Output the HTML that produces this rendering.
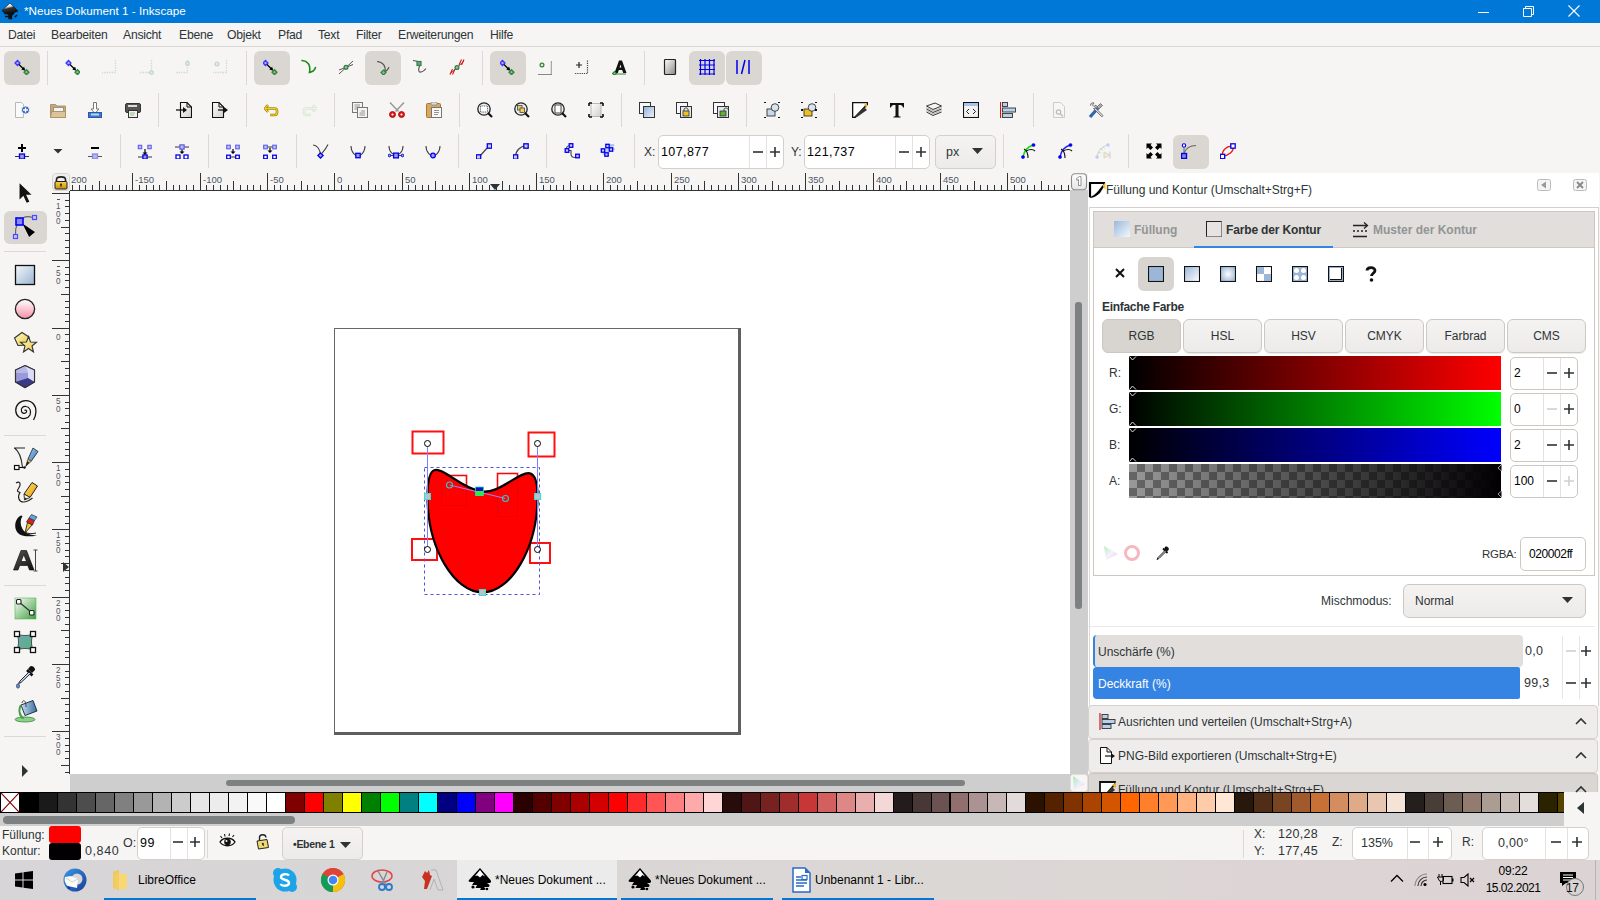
<!DOCTYPE html><html><head><meta charset="utf-8"><style>
html,body{margin:0;padding:0}
body{width:1600px;height:900px;overflow:hidden;position:relative;background:#f6f5f4;font-family:"Liberation Sans",sans-serif;color:#2e3436}
div{position:absolute;box-sizing:border-box}
.t{white-space:nowrap;font-size:12px;line-height:14px}
</style></head><body>
<div style="left:0px;top:0px;width:1600px;height:23px;background:#0078d7"></div>
<div class="t" style="left:24px;top:4px;color:#fff;font-size:11.7px;line-height:14px">*Neues Dokument 1 - Inkscape</div>
<svg style="position:absolute;left:1476px;top:4px;" width="16" height="16" viewBox="0 0 16 16"><path d="M2 8.5h11" stroke="#fff" stroke-width="1"/></svg>
<svg style="position:absolute;left:1520px;top:3px;" width="16" height="16" viewBox="0 0 16 16"><path d="M3.5 5.5h8v8h-8z M5.5 5.5v-2h8v8h-2" fill="none" stroke="#fff" stroke-width="1"/></svg>
<svg style="position:absolute;left:1566px;top:3px;" width="16" height="16" viewBox="0 0 16 16"><path d="M2.5 2.5l11 11M13.5 2.5l-11 11" stroke="#fff" stroke-width="1.1"/></svg>
<div class="t" style="left:8px;top:28px;font-size:12.2px;color:#2e3436;width:27px;letter-spacing:-0.25px">Datei</div>
<div class="t" style="left:51px;top:28px;font-size:12.2px;color:#2e3436;width:56px;letter-spacing:-0.25px">Bearbeiten</div>
<div class="t" style="left:123px;top:28px;font-size:12.2px;color:#2e3436;width:40px;letter-spacing:-0.25px">Ansicht</div>
<div class="t" style="left:179px;top:28px;font-size:12.2px;color:#2e3436;width:32px;letter-spacing:-0.25px">Ebene</div>
<div class="t" style="left:227px;top:28px;font-size:12.2px;color:#2e3436;width:35px;letter-spacing:-0.25px">Objekt</div>
<div class="t" style="left:278px;top:28px;font-size:12.2px;color:#2e3436;width:24px;letter-spacing:-0.25px">Pfad</div>
<div class="t" style="left:318px;top:28px;font-size:12.2px;color:#2e3436;width:22px;letter-spacing:-0.25px">Text</div>
<div class="t" style="left:356px;top:28px;font-size:12.2px;color:#2e3436;width:26px;letter-spacing:-0.25px">Filter</div>
<div class="t" style="left:398px;top:28px;font-size:12.2px;color:#2e3436;width:75px;letter-spacing:-0.25px">Erweiterungen</div>
<div class="t" style="left:490px;top:28px;font-size:12.2px;color:#2e3436;width:25px;letter-spacing:-0.25px">Hilfe</div>
<div style="left:0px;top:46px;width:1600px;height:1px;background:#dad6d2"></div>
<div style="left:70px;top:191px;width:1000px;height:583px;background:#fff"></div>
<div style="left:70px;top:774px;width:1000px;height:18px;background:#cecece"></div>
<div style="left:1070px;top:190px;width:18px;height:602px;background:#cecece"></div>
<div style="left:1088px;top:173px;width:1px;height:533px;background:#dcd8d4"></div>
<div style="left:226px;top:780px;width:739px;height:6px;background:#7e8182;border-radius:3px"></div>
<div style="left:1075px;top:302px;width:7px;height:307px;background:#7e8182;border-radius:3px"></div>
<div style="left:1088px;top:173px;width:511px;height:533px;background:#fff"></div>
<div style="left:1089px;top:207px;width:510px;height:1px;background:#d5d0cc"></div>
<div style="left:1089px;top:207px;width:1px;height:499px;background:#dcd8d4"></div>
<div style="left:1598px;top:207px;width:1px;height:499px;background:#d5d0cc"></div>
<div class="t" style="left:1106px;top:183px;font-size:12px;color:#2e3436">Füllung und Kontur (Umschalt+Strg+F)</div>
<div style="left:1093px;top:211px;width:502px;height:365px;border:1px solid #cdc7c2;background:#fff"></div>
<div style="left:1094px;top:212px;width:500px;height:36px;background:#e1dedb;border-bottom:1px solid #cdc7c2"></div>
<div style="left:1194px;top:246px;width:139px;height:2px;background:#3584e4"></div>
<div class="t" style="left:1134px;top:223px;font-size:12px;color:#929595;font-weight:bold">Füllung</div>
<div class="t" style="left:1226px;top:223px;font-size:12px;color:#2e3436;font-weight:bold;letter-spacing:-0.15px">Farbe der Kontur</div>
<div class="t" style="left:1373px;top:223px;font-size:12px;color:#929595;font-weight:bold">Muster der Kontur</div>
<div style="left:1138px;top:257px;width:36px;height:34px;background:#d8d4d0;border-radius:6px"></div>
<div class="t" style="left:1102px;top:300px;font-size:12px;color:#2e3436;font-weight:bold;letter-spacing:-0.3px">Einfache Farbe</div>
<div style="left:1102px;top:319px;width:79px;height:34px;background:#d8d4d0;border:1px solid #cdc7c2;border-radius:6px"></div>
<div class="t" style="left:1102px;top:329px;width:79px;text-align:center;font-size:12px;color:#2e3436">RGB</div>
<div style="left:1183px;top:319px;width:79px;height:34px;background:linear-gradient(#f4f3f2,#edebe9);border:1px solid #cdc7c2;border-radius:6px;box-shadow:0 1px 0 rgba(0,0,0,0.07)"></div>
<div class="t" style="left:1183px;top:329px;width:79px;text-align:center;font-size:12px;color:#2e3436">HSL</div>
<div style="left:1264px;top:319px;width:79px;height:34px;background:linear-gradient(#f4f3f2,#edebe9);border:1px solid #cdc7c2;border-radius:6px;box-shadow:0 1px 0 rgba(0,0,0,0.07)"></div>
<div class="t" style="left:1264px;top:329px;width:79px;text-align:center;font-size:12px;color:#2e3436">HSV</div>
<div style="left:1345px;top:319px;width:79px;height:34px;background:linear-gradient(#f4f3f2,#edebe9);border:1px solid #cdc7c2;border-radius:6px;box-shadow:0 1px 0 rgba(0,0,0,0.07)"></div>
<div class="t" style="left:1345px;top:329px;width:79px;text-align:center;font-size:12px;color:#2e3436">CMYK</div>
<div style="left:1426px;top:319px;width:79px;height:34px;background:linear-gradient(#f4f3f2,#edebe9);border:1px solid #cdc7c2;border-radius:6px;box-shadow:0 1px 0 rgba(0,0,0,0.07)"></div>
<div class="t" style="left:1426px;top:329px;width:79px;text-align:center;font-size:12px;color:#2e3436">Farbrad</div>
<div style="left:1507px;top:319px;width:79px;height:34px;background:linear-gradient(#f4f3f2,#edebe9);border:1px solid #cdc7c2;border-radius:6px;box-shadow:0 1px 0 rgba(0,0,0,0.07)"></div>
<div class="t" style="left:1507px;top:329px;width:79px;text-align:center;font-size:12px;color:#2e3436">CMS</div>
<div class="t" style="left:1109px;top:366px;font-size:12px;color:#2e3436">R:</div>
<div style="left:1129px;top:356px;width:372px;height:34px;background:linear-gradient(90deg,#000,#ff0000)"></div>
<div style="left:1510px;top:357px;width:68px;height:33px;background:#fff;border:1px solid #cdc7c2;border-radius:5px"></div>
<div style="left:1543px;top:358px;width:1px;height:31px;background:#e4e1de"></div>
<div style="left:1560px;top:358px;width:1px;height:31px;background:#e4e1de"></div>
<div class="t" style="left:1514px;top:366px;font-size:12px;color:#000">2</div>
<div class="t" style="left:1109px;top:402px;font-size:12px;color:#2e3436">G:</div>
<div style="left:1129px;top:392px;width:372px;height:34px;background:linear-gradient(90deg,#000,#00ff00)"></div>
<div style="left:1510px;top:393px;width:68px;height:33px;background:#fff;border:1px solid #cdc7c2;border-radius:5px"></div>
<div style="left:1543px;top:394px;width:1px;height:31px;background:#e4e1de"></div>
<div style="left:1560px;top:394px;width:1px;height:31px;background:#e4e1de"></div>
<div class="t" style="left:1514px;top:402px;font-size:12px;color:#000">0</div>
<div class="t" style="left:1109px;top:438px;font-size:12px;color:#2e3436">B:</div>
<div style="left:1129px;top:428px;width:372px;height:34px;background:linear-gradient(90deg,#000,#0000ff)"></div>
<div style="left:1510px;top:429px;width:68px;height:33px;background:#fff;border:1px solid #cdc7c2;border-radius:5px"></div>
<div style="left:1543px;top:430px;width:1px;height:31px;background:#e4e1de"></div>
<div style="left:1560px;top:430px;width:1px;height:31px;background:#e4e1de"></div>
<div class="t" style="left:1514px;top:438px;font-size:12px;color:#000">2</div>
<div class="t" style="left:1109px;top:474px;font-size:12px;color:#2e3436">A:</div>
<div style="left:1129px;top:464px;width:372px;height:34px;background-color:#999;background-image:linear-gradient(90deg,rgba(2,0,2,0),rgba(2,0,2,1)),linear-gradient(45deg,#666 25%,transparent 25%,transparent 75%,#666 75%),linear-gradient(45deg,#666 25%,transparent 25%,transparent 75%,#666 75%);background-size:100% 100%,16px 16px,16px 16px;background-position:0 0,0 0,8px 8px"></div>
<div style="left:1510px;top:465px;width:68px;height:33px;background:#fff;border:1px solid #cdc7c2;border-radius:5px"></div>
<div style="left:1543px;top:466px;width:1px;height:31px;background:#e4e1de"></div>
<div style="left:1560px;top:466px;width:1px;height:31px;background:#e4e1de"></div>
<div class="t" style="left:1514px;top:474px;font-size:12px;color:#000">100</div>
<div class="t" style="left:1482px;top:547px;font-size:11.5px;color:#2e3436;letter-spacing:-0.3px">RGBA:</div>
<div style="left:1520px;top:537px;width:66px;height:34px;background:#fff;border:1px solid #cdc7c2;border-radius:5px"></div>
<div class="t" style="left:1529px;top:547px;font-size:12px;color:#000;letter-spacing:-0.4px">020002ff</div>
<div class="t" style="left:1321px;top:594px;font-size:12px;color:#2e3436">Mischmodus:</div>
<div style="left:1403px;top:584px;width:183px;height:34px;background:linear-gradient(#f4f3f2,#edebe9);border:1px solid #cdc7c2;border-radius:6px"></div>
<div class="t" style="left:1415px;top:594px;font-size:12px;color:#2e3436">Normal</div>
<div style="left:1088px;top:626px;width:507px;height:1px;background:#ebe9e7"></div>
<div style="left:1093px;top:635px;width:430px;height:32px;background:#e1dedb;border-left:2px solid #3584e4;border-radius:4px"></div>
<div class="t" style="left:1098px;top:645px;font-size:12px;color:#2e3436">Unschärfe (%)</div>
<div class="t" style="left:1525px;top:644px;font-size:12.5px;color:#2e3436;letter-spacing:0.3px">0,0</div>
<div style="left:1093px;top:667px;width:427px;height:32px;background:#3584e4;border-radius:4px 2px 2px 4px"></div>
<div class="t" style="left:1098px;top:677px;font-size:12px;color:#fff">Deckkraft (%)</div>
<div class="t" style="left:1524px;top:676px;font-size:12.5px;color:#2e3436;letter-spacing:0.3px">99,3</div>
<div style="left:1562px;top:636px;width:1px;height:63px;background:#e9e7e5"></div>
<div style="left:1579px;top:636px;width:1px;height:63px;background:#e9e7e5"></div>
<div style="left:1088px;top:705px;width:510px;height:34px;background:#eeedec;border:1px solid #d6d1cd;border-radius:4px"></div>
<div class="t" style="left:1118px;top:715px;font-size:12px;color:#2e3436">Ausrichten und verteilen (Umschalt+Strg+A)</div>
<div style="left:1088px;top:739px;width:510px;height:34px;background:#eeedec;border:1px solid #d6d1cd;border-radius:4px"></div>
<div class="t" style="left:1118px;top:749px;font-size:12px;color:#2e3436">PNG-Bild exportieren (Umschalt+Strg+E)</div>
<div style="left:1088px;top:773px;width:510px;height:19px;background:#dad6d3;border:1px solid #cdc7c2;border-bottom:none;border-radius:4px 4px 0 0"></div>
<div class="t" style="left:1118px;top:783px;font-size:12px;color:#2e3436">Füllung und Kontur (Umschalt+Strg+F)</div>
<div style="left:0px;top:792px;width:1564px;height:21px;background:#000"></div>
<svg style="position:absolute;left:1px;top:793px;" width="18" height="19" viewBox="0 0 18 19"><rect width="18" height="19" fill="#fff"/><path d="M0 0L18 19M18 0L0 19" stroke="#800000" stroke-width="1.2"/></svg>
<div style="left:19.99px;top:793px;width:17.99px;height:19px;background:#000000"></div>
<div style="left:38.98px;top:793px;width:17.99px;height:19px;background:#1a1a1a"></div>
<div style="left:57.97px;top:793px;width:17.99px;height:19px;background:#333333"></div>
<div style="left:76.96px;top:793px;width:17.99px;height:19px;background:#4d4d4d"></div>
<div style="left:95.95px;top:793px;width:17.99px;height:19px;background:#666666"></div>
<div style="left:114.94px;top:793px;width:17.99px;height:19px;background:#808080"></div>
<div style="left:133.93px;top:793px;width:17.99px;height:19px;background:#999999"></div>
<div style="left:152.92px;top:793px;width:17.99px;height:19px;background:#b3b3b3"></div>
<div style="left:171.91px;top:793px;width:17.99px;height:19px;background:#cccccc"></div>
<div style="left:190.9px;top:793px;width:17.99px;height:19px;background:#e6e6e6"></div>
<div style="left:209.89px;top:793px;width:17.99px;height:19px;background:#ececec"></div>
<div style="left:228.88px;top:793px;width:17.99px;height:19px;background:#f2f2f2"></div>
<div style="left:247.87px;top:793px;width:17.99px;height:19px;background:#f9f9f9"></div>
<div style="left:266.86px;top:793px;width:17.99px;height:19px;background:#ffffff"></div>
<div style="left:285.85px;top:793px;width:17.99px;height:19px;background:#800000"></div>
<div style="left:304.84px;top:793px;width:17.99px;height:19px;background:#ff0000"></div>
<div style="left:323.83px;top:793px;width:17.99px;height:19px;background:#808000"></div>
<div style="left:342.82px;top:793px;width:17.99px;height:19px;background:#ffff00"></div>
<div style="left:361.81px;top:793px;width:17.99px;height:19px;background:#008000"></div>
<div style="left:380.8px;top:793px;width:17.99px;height:19px;background:#00ff00"></div>
<div style="left:399.79px;top:793px;width:17.99px;height:19px;background:#008080"></div>
<div style="left:418.78px;top:793px;width:17.99px;height:19px;background:#00ffff"></div>
<div style="left:437.77px;top:793px;width:17.99px;height:19px;background:#000080"></div>
<div style="left:456.76px;top:793px;width:17.99px;height:19px;background:#0000ff"></div>
<div style="left:475.75px;top:793px;width:17.99px;height:19px;background:#800080"></div>
<div style="left:494.74px;top:793px;width:17.99px;height:19px;background:#ff00ff"></div>
<div style="left:513.73px;top:793px;width:17.99px;height:19px;background:#2b0000"></div>
<div style="left:532.72px;top:793px;width:17.99px;height:19px;background:#550000"></div>
<div style="left:551.71px;top:793px;width:17.99px;height:19px;background:#800000"></div>
<div style="left:570.7px;top:793px;width:17.99px;height:19px;background:#aa0000"></div>
<div style="left:589.69px;top:793px;width:17.99px;height:19px;background:#d40000"></div>
<div style="left:608.68px;top:793px;width:17.99px;height:19px;background:#ff0000"></div>
<div style="left:627.67px;top:793px;width:17.99px;height:19px;background:#ff2a2a"></div>
<div style="left:646.66px;top:793px;width:17.99px;height:19px;background:#ff5555"></div>
<div style="left:665.65px;top:793px;width:17.99px;height:19px;background:#ff8080"></div>
<div style="left:684.64px;top:793px;width:17.99px;height:19px;background:#ffaaaa"></div>
<div style="left:703.63px;top:793px;width:17.99px;height:19px;background:#ffd5d5"></div>
<div style="left:722.62px;top:793px;width:17.99px;height:19px;background:#280b0b"></div>
<div style="left:741.61px;top:793px;width:17.99px;height:19px;background:#501616"></div>
<div style="left:760.6px;top:793px;width:17.99px;height:19px;background:#782121"></div>
<div style="left:779.59px;top:793px;width:17.99px;height:19px;background:#a02c2c"></div>
<div style="left:798.58px;top:793px;width:17.99px;height:19px;background:#c83737"></div>
<div style="left:817.57px;top:793px;width:17.99px;height:19px;background:#d35f5f"></div>
<div style="left:836.56px;top:793px;width:17.99px;height:19px;background:#de8787"></div>
<div style="left:855.55px;top:793px;width:17.99px;height:19px;background:#e9afaf"></div>
<div style="left:874.54px;top:793px;width:17.99px;height:19px;background:#f4d7d7"></div>
<div style="left:893.53px;top:793px;width:17.99px;height:19px;background:#241c1c"></div>
<div style="left:912.52px;top:793px;width:17.99px;height:19px;background:#483737"></div>
<div style="left:931.51px;top:793px;width:17.99px;height:19px;background:#6c5353"></div>
<div style="left:950.5px;top:793px;width:17.99px;height:19px;background:#916f6f"></div>
<div style="left:969.49px;top:793px;width:17.99px;height:19px;background:#ac9393"></div>
<div style="left:988.48px;top:793px;width:17.99px;height:19px;background:#c8b7b7"></div>
<div style="left:1007.47px;top:793px;width:17.99px;height:19px;background:#e3dbdb"></div>
<div style="left:1026.46px;top:793px;width:17.99px;height:19px;background:#2b1100"></div>
<div style="left:1045.45px;top:793px;width:17.99px;height:19px;background:#552200"></div>
<div style="left:1064.44px;top:793px;width:17.99px;height:19px;background:#803300"></div>
<div style="left:1083.43px;top:793px;width:17.99px;height:19px;background:#aa4400"></div>
<div style="left:1102.42px;top:793px;width:17.99px;height:19px;background:#d45500"></div>
<div style="left:1121.41px;top:793px;width:17.99px;height:19px;background:#ff6600"></div>
<div style="left:1140.4px;top:793px;width:17.99px;height:19px;background:#ff7f2a"></div>
<div style="left:1159.39px;top:793px;width:17.99px;height:19px;background:#ff9955"></div>
<div style="left:1178.38px;top:793px;width:17.99px;height:19px;background:#ffb380"></div>
<div style="left:1197.37px;top:793px;width:17.99px;height:19px;background:#ffccaa"></div>
<div style="left:1216.36px;top:793px;width:17.99px;height:19px;background:#ffe6d5"></div>
<div style="left:1235.35px;top:793px;width:17.99px;height:19px;background:#28170b"></div>
<div style="left:1254.34px;top:793px;width:17.99px;height:19px;background:#502d16"></div>
<div style="left:1273.33px;top:793px;width:17.99px;height:19px;background:#784421"></div>
<div style="left:1292.32px;top:793px;width:17.99px;height:19px;background:#a05a2c"></div>
<div style="left:1311.31px;top:793px;width:17.99px;height:19px;background:#c87137"></div>
<div style="left:1330.3px;top:793px;width:17.99px;height:19px;background:#d38d5f"></div>
<div style="left:1349.29px;top:793px;width:17.99px;height:19px;background:#deaa87"></div>
<div style="left:1368.28px;top:793px;width:17.99px;height:19px;background:#e9c6af"></div>
<div style="left:1387.27px;top:793px;width:17.99px;height:19px;background:#f4e3d7"></div>
<div style="left:1406.26px;top:793px;width:17.99px;height:19px;background:#241f1c"></div>
<div style="left:1425.25px;top:793px;width:17.99px;height:19px;background:#483e37"></div>
<div style="left:1444.24px;top:793px;width:17.99px;height:19px;background:#6c5d53"></div>
<div style="left:1463.23px;top:793px;width:17.99px;height:19px;background:#917c6f"></div>
<div style="left:1482.22px;top:793px;width:17.99px;height:19px;background:#ac9d93"></div>
<div style="left:1501.21px;top:793px;width:17.99px;height:19px;background:#c8beb7"></div>
<div style="left:1520.2px;top:793px;width:17.99px;height:19px;background:#e3dedb"></div>
<div style="left:1539.19px;top:793px;width:17.99px;height:19px;background:#2b2200"></div>
<div style="left:1558.18px;top:793px;width:5.82px;height:19px;background:#554400"></div>
<div style="left:1564px;top:792px;width:36px;height:34px;background:#f6f5f4"></div>
<svg style="position:absolute;left:1576px;top:802px;" width="10" height="12" viewBox="0 0 10 12"><path d="M8 0v12L1 6z" fill="#2e3436"/></svg>
<div style="left:0px;top:813px;width:1564px;height:13px;background:#cecece"></div>
<div style="left:3px;top:816px;width:292px;height:8px;background:#7e8182;border-radius:4px"></div>
<div style="left:0px;top:826px;width:1600px;height:34px;background:#f6f5f4"></div>
<div class="t" style="left:2px;top:828px;font-size:12px;color:#2e3436">Füllung:</div>
<div class="t" style="left:2px;top:844px;font-size:12px;color:#2e3436">Kontur:</div>
<div style="left:49px;top:826px;width:32px;height:17px;background:#f00;border-radius:3px"></div>
<div style="left:49px;top:843px;width:32px;height:17px;background:#020002;border-radius:3px"></div>
<div class="t" style="left:85px;top:844px;font-size:12.5px;color:#2e3436;letter-spacing:0.6px">0,840</div>
<div class="t" style="left:123px;top:836px;font-size:12.5px;color:#2e3436">O:</div>
<div style="left:137px;top:827px;width:68px;height:33px;background:#fff;border:1px solid #d3cfcb;border-radius:5px"></div>
<div style="left:170px;top:828px;width:1px;height:31px;background:#e4e1de"></div>
<div style="left:187px;top:828px;width:1px;height:31px;background:#e4e1de"></div>
<div class="t" style="left:140px;top:836px;font-size:12.5px;color:#000;letter-spacing:0.5px">99</div>
<div style="left:207px;top:830px;width:1px;height:28px;background:#dcd8d4"></div>
<div style="left:282px;top:827px;width:81px;height:33px;background:linear-gradient(#f4f3f2,#edebe9);border:1px solid #d3cfcb;border-radius:5px"></div>
<div class="t" style="left:293px;top:837px;font-size:10.5px;color:#2e3436;font-weight:bold;letter-spacing:-0.3px">•Ebene 1</div>
<div style="left:1243px;top:830px;width:1px;height:28px;background:#dcd8d4"></div>
<div class="t" style="left:1254px;top:827px;font-size:12px;color:#2e3436">X:</div>
<div class="t" style="left:1254px;top:844px;font-size:12px;color:#2e3436">Y:</div>
<div class="t" style="left:1278px;top:827px;font-size:12.5px;color:#2e3436;letter-spacing:0.3px">120,28</div>
<div class="t" style="left:1278px;top:844px;font-size:12.5px;color:#2e3436;letter-spacing:0.3px">177,45</div>
<div class="t" style="left:1332px;top:835px;font-size:12px;color:#2e3436">Z:</div>
<div style="left:1352px;top:827px;width:100px;height:33px;background:#fff;border:1px solid #d3cfcb;border-radius:5px"></div>
<div style="left:1407px;top:828px;width:1px;height:31px;background:#e4e1de"></div>
<div style="left:1428px;top:828px;width:1px;height:31px;background:#e4e1de"></div>
<div class="t" style="left:1361px;top:836px;font-size:12.5px;color:#2e3436">135%</div>
<div class="t" style="left:1462px;top:835px;font-size:12px;color:#2e3436">R:</div>
<div style="left:1482px;top:827px;width:107px;height:33px;background:#fff;border:1px solid #d3cfcb;border-radius:5px"></div>
<div style="left:1545px;top:828px;width:1px;height:31px;background:#e4e1de"></div>
<div style="left:1567px;top:828px;width:1px;height:31px;background:#e4e1de"></div>
<div class="t" style="left:1498px;top:836px;font-size:12.5px;color:#2e3436;letter-spacing:0.3px">0,00°</div>
<div style="left:0px;top:860px;width:1600px;height:40px;background:linear-gradient(90deg,#d7d5d7,#d9d6d6 35%,#dbd7d5 60%,#ddd5d5 80%,#dcd4d4)"></div>
<div style="left:104px;top:898px;width:152px;height:2px;background:#0078d7"></div>
<div class="t" style="left:138px;top:873px;font-size:12px;color:#000">LibreOffice</div>
<div style="left:457px;top:860px;width:160px;height:40px;background:#ecebeb"></div>
<div style="left:457px;top:898px;width:160px;height:2px;background:#0078d7"></div>
<div class="t" style="left:495px;top:873px;font-size:12px;color:#000">*Neues Dokument ...</div>
<div style="left:621px;top:898px;width:152px;height:2px;background:#0078d7"></div>
<div class="t" style="left:655px;top:873px;font-size:12px;color:#000">*Neues Dokument ...</div>
<div style="left:782px;top:898px;width:152px;height:2px;background:#0078d7"></div>
<div class="t" style="left:815px;top:873px;font-size:12px;color:#000">Unbenannt 1 - Libr...</div>
<div class="t" style="left:1473px;top:864px;font-size:12px;color:#000;width:80px;text-align:center;letter-spacing:-0.2px">09:22</div>
<div class="t" style="left:1473px;top:881px;font-size:12px;color:#000;width:80px;text-align:center;letter-spacing:-0.55px">15.02.2021</div>
<svg style="position:absolute;left:70px;top:173px;" width="1000" height="18" viewBox="0 0 1000 18"><path d="M2.5 12V17 M9.5 12V17 M15.5 12V17 M22.5 12V17 M29.5 8V17 M35.5 12V17 M42.5 12V17 M49.5 12V17 M56.5 12V17 M62.5 0V17 M69.5 12V17 M76.5 12V17 M83.5 12V17 M89.5 12V17 M96.5 8V17 M103.5 12V17 M109.5 12V17 M116.5 12V17 M123.5 12V17 M130.5 0V17 M136.5 12V17 M143.5 12V17 M150.5 12V17 M157.5 12V17 M163.5 8V17 M170.5 12V17 M177.5 12V17 M183.5 12V17 M190.5 12V17 M197.5 0V17 M204.5 12V17 M210.5 12V17 M217.5 12V17 M224.5 12V17 M231.5 8V17 M237.5 12V17 M244.5 12V17 M251.5 12V17 M258.5 12V17 M264.5 0V17 M271.5 12V17 M278.5 12V17 M284.5 12V17 M291.5 12V17 M298.5 8V17 M305.5 12V17 M311.5 12V17 M318.5 12V17 M325.5 12V17 M332.5 0V17 M338.5 12V17 M345.5 12V17 M352.5 12V17 M358.5 12V17 M365.5 8V17 M372.5 12V17 M379.5 12V17 M385.5 12V17 M392.5 12V17 M399.5 0V17 M406.5 12V17 M412.5 12V17 M419.5 12V17 M426.5 12V17 M432.5 8V17 M439.5 12V17 M446.5 12V17 M453.5 12V17 M459.5 12V17 M466.5 0V17 M473.5 12V17 M480.5 12V17 M486.5 12V17 M493.5 12V17 M500.5 8V17 M507.5 12V17 M513.5 12V17 M520.5 12V17 M527.5 12V17 M533.5 0V17 M540.5 12V17 M547.5 12V17 M554.5 12V17 M560.5 12V17 M567.5 8V17 M574.5 12V17 M581.5 12V17 M587.5 12V17 M594.5 12V17 M601.5 0V17 M607.5 12V17 M614.5 12V17 M621.5 12V17 M628.5 12V17 M634.5 8V17 M641.5 12V17 M648.5 12V17 M655.5 12V17 M661.5 12V17 M668.5 0V17 M675.5 12V17 M682.5 12V17 M688.5 12V17 M695.5 12V17 M702.5 8V17 M708.5 12V17 M715.5 12V17 M722.5 12V17 M729.5 12V17 M735.5 0V17 M742.5 12V17 M749.5 12V17 M756.5 12V17 M762.5 12V17 M769.5 8V17 M776.5 12V17 M782.5 12V17 M789.5 12V17 M796.5 12V17 M803.5 0V17 M809.5 12V17 M816.5 12V17 M823.5 12V17 M830.5 12V17 M836.5 8V17 M843.5 12V17 M850.5 12V17 M856.5 12V17 M863.5 12V17 M870.5 0V17 M877.5 12V17 M883.5 12V17 M890.5 12V17 M897.5 12V17 M904.5 8V17 M910.5 12V17 M917.5 12V17 M924.5 12V17 M931.5 12V17 M937.5 0V17 M944.5 12V17 M951.5 12V17 M957.5 12V17 M964.5 12V17 M971.5 8V17 M978.5 12V17 M984.5 12V17 M991.5 12V17 M998.5 12V17 M0 17.5H1000" stroke="#2e3436" stroke-width="1" fill="none"/></svg>
<div class="t" style="left:135px;top:175px;font-size:9.5px;line-height:10px;color:#4d5563">-150</div>
<div class="t" style="left:203px;top:175px;font-size:9.5px;line-height:10px;color:#4d5563">-100</div>
<div class="t" style="left:270px;top:175px;font-size:9.5px;line-height:10px;color:#4d5563">-50</div>
<div class="t" style="left:337px;top:175px;font-size:9.5px;line-height:10px;color:#4d5563">0</div>
<div class="t" style="left:405px;top:175px;font-size:9.5px;line-height:10px;color:#4d5563">50</div>
<div class="t" style="left:472px;top:175px;font-size:9.5px;line-height:10px;color:#4d5563">100</div>
<div class="t" style="left:539px;top:175px;font-size:9.5px;line-height:10px;color:#4d5563">150</div>
<div class="t" style="left:606px;top:175px;font-size:9.5px;line-height:10px;color:#4d5563">200</div>
<div class="t" style="left:674px;top:175px;font-size:9.5px;line-height:10px;color:#4d5563">250</div>
<div class="t" style="left:741px;top:175px;font-size:9.5px;line-height:10px;color:#4d5563">300</div>
<div class="t" style="left:808px;top:175px;font-size:9.5px;line-height:10px;color:#4d5563">350</div>
<div class="t" style="left:876px;top:175px;font-size:9.5px;line-height:10px;color:#4d5563">400</div>
<div class="t" style="left:943px;top:175px;font-size:9.5px;line-height:10px;color:#4d5563">450</div>
<div class="t" style="left:1010px;top:175px;font-size:9.5px;line-height:10px;color:#4d5563">500</div>
<div class="t" style="left:71px;top:175px;font-size:9.5px;line-height:10px;color:#4d5563">200</div>
<svg style="position:absolute;left:52px;top:173px;" width="18" height="601" viewBox="0 0 18 601"><path d="M0 20.5H17 M13 27.5H17 M13 33.5H17 M13 40.5H17 M13 47.5H17 M9 54.5H17 M13 60.5H17 M13 67.5H17 M13 74.5H17 M13 80.5H17 M0 87.5H17 M13 94.5H17 M13 101.5H17 M13 107.5H17 M13 114.5H17 M9 121.5H17 M13 128.5H17 M13 134.5H17 M13 141.5H17 M13 148.5H17 M0 155.5H17 M13 161.5H17 M13 168.5H17 M13 175.5H17 M13 181.5H17 M9 188.5H17 M13 195.5H17 M13 202.5H17 M13 208.5H17 M13 215.5H17 M0 222.5H17 M13 229.5H17 M13 235.5H17 M13 242.5H17 M13 249.5H17 M9 255.5H17 M13 262.5H17 M13 269.5H17 M13 276.5H17 M13 282.5H17 M0 289.5H17 M13 296.5H17 M13 303.5H17 M13 309.5H17 M13 316.5H17 M9 323.5H17 M13 329.5H17 M13 336.5H17 M13 343.5H17 M13 350.5H17 M0 356.5H17 M13 363.5H17 M13 370.5H17 M13 377.5H17 M13 383.5H17 M9 390.5H17 M13 397.5H17 M13 404.5H17 M13 410.5H17 M13 417.5H17 M0 424.5H17 M13 430.5H17 M13 437.5H17 M13 444.5H17 M13 451.5H17 M9 457.5H17 M13 464.5H17 M13 471.5H17 M13 478.5H17 M13 484.5H17 M0 491.5H17 M13 498.5H17 M13 504.5H17 M13 511.5H17 M13 518.5H17 M9 525.5H17 M13 531.5H17 M13 538.5H17 M13 545.5H17 M13 552.5H17 M0 558.5H17 M13 565.5H17 M13 572.5H17 M13 578.5H17 M13 585.5H17 M9 592.5H17 M13 599.5H17 M17.5 18V601" stroke="#2e3436" stroke-width="1" fill="none"/></svg>
<div style="left:57px;top:199px;width:3px;height:1px;background:#4d5563"></div>
<div class="t" style="left:56px;top:202px;font-size:9px;line-height:8px;height:8px;color:#4d5563;transform:scaleX(0.9);transform-origin:0 0">1</div>
<div class="t" style="left:56px;top:209.7px;font-size:9px;line-height:8px;height:8px;color:#4d5563;transform:scaleX(0.9);transform-origin:0 0">0</div>
<div class="t" style="left:56px;top:217.39999999999998px;font-size:9px;line-height:8px;height:8px;color:#4d5563;transform:scaleX(0.9);transform-origin:0 0">0</div>
<div style="left:57px;top:266px;width:3px;height:1px;background:#4d5563"></div>
<div class="t" style="left:56px;top:269px;font-size:9px;line-height:8px;height:8px;color:#4d5563;transform:scaleX(0.9);transform-origin:0 0">5</div>
<div class="t" style="left:56px;top:276.7px;font-size:9px;line-height:8px;height:8px;color:#4d5563;transform:scaleX(0.9);transform-origin:0 0">0</div>
<div class="t" style="left:56px;top:333px;font-size:9px;line-height:8px;height:8px;color:#4d5563;transform:scaleX(0.9);transform-origin:0 0">0</div>
<div class="t" style="left:56px;top:397px;font-size:9px;line-height:8px;height:8px;color:#4d5563;transform:scaleX(0.9);transform-origin:0 0">5</div>
<div class="t" style="left:56px;top:404.7px;font-size:9px;line-height:8px;height:8px;color:#4d5563;transform:scaleX(0.9);transform-origin:0 0">0</div>
<div class="t" style="left:56px;top:464px;font-size:9px;line-height:8px;height:8px;color:#4d5563;transform:scaleX(0.9);transform-origin:0 0">1</div>
<div class="t" style="left:56px;top:471.7px;font-size:9px;line-height:8px;height:8px;color:#4d5563;transform:scaleX(0.9);transform-origin:0 0">0</div>
<div class="t" style="left:56px;top:479.4px;font-size:9px;line-height:8px;height:8px;color:#4d5563;transform:scaleX(0.9);transform-origin:0 0">0</div>
<div class="t" style="left:56px;top:531px;font-size:9px;line-height:8px;height:8px;color:#4d5563;transform:scaleX(0.9);transform-origin:0 0">1</div>
<div class="t" style="left:56px;top:538.7px;font-size:9px;line-height:8px;height:8px;color:#4d5563;transform:scaleX(0.9);transform-origin:0 0">5</div>
<div class="t" style="left:56px;top:546.4000000000001px;font-size:9px;line-height:8px;height:8px;color:#4d5563;transform:scaleX(0.9);transform-origin:0 0">0</div>
<div class="t" style="left:56px;top:599px;font-size:9px;line-height:8px;height:8px;color:#4d5563;transform:scaleX(0.9);transform-origin:0 0">2</div>
<div class="t" style="left:56px;top:606.7px;font-size:9px;line-height:8px;height:8px;color:#4d5563;transform:scaleX(0.9);transform-origin:0 0">0</div>
<div class="t" style="left:56px;top:614.4000000000001px;font-size:9px;line-height:8px;height:8px;color:#4d5563;transform:scaleX(0.9);transform-origin:0 0">0</div>
<div class="t" style="left:56px;top:666px;font-size:9px;line-height:8px;height:8px;color:#4d5563;transform:scaleX(0.9);transform-origin:0 0">2</div>
<div class="t" style="left:56px;top:673.7px;font-size:9px;line-height:8px;height:8px;color:#4d5563;transform:scaleX(0.9);transform-origin:0 0">5</div>
<div class="t" style="left:56px;top:681.4000000000001px;font-size:9px;line-height:8px;height:8px;color:#4d5563;transform:scaleX(0.9);transform-origin:0 0">0</div>
<div class="t" style="left:56px;top:733px;font-size:9px;line-height:8px;height:8px;color:#4d5563;transform:scaleX(0.9);transform-origin:0 0">3</div>
<div class="t" style="left:56px;top:740.7px;font-size:9px;line-height:8px;height:8px;color:#4d5563;transform:scaleX(0.9);transform-origin:0 0">0</div>
<div class="t" style="left:56px;top:748.4000000000001px;font-size:9px;line-height:8px;height:8px;color:#4d5563;transform:scaleX(0.9);transform-origin:0 0">0</div>
<div style="left:4px;top:51px;width:36px;height:34px;background:#dad6d2;border-radius:6px"></div>
<div style="left:47px;top:51px;width:1px;height:34px;background:#dcd8d4"></div>
<div style="left:246px;top:51px;width:1px;height:34px;background:#dcd8d4"></div>
<div style="left:482px;top:51px;width:1px;height:34px;background:#dcd8d4"></div>
<div style="left:644px;top:51px;width:1px;height:34px;background:#dcd8d4"></div>
<div style="left:254px;top:51px;width:36px;height:34px;background:#dad6d2;border-radius:6px"></div>
<div style="left:365px;top:51px;width:36px;height:34px;background:#dad6d2;border-radius:6px"></div>
<div style="left:490px;top:51px;width:36px;height:34px;background:#dad6d2;border-radius:6px"></div>
<div style="left:689px;top:51px;width:36px;height:34px;background:#dad6d2;border-radius:6px"></div>
<div style="left:726px;top:51px;width:36px;height:34px;background:#dad6d2;border-radius:6px"></div>
<div style="left:158px;top:93px;width:1px;height:34px;background:#dcd8d4"></div>
<div style="left:246px;top:93px;width:1px;height:34px;background:#dcd8d4"></div>
<div style="left:334px;top:93px;width:1px;height:34px;background:#dcd8d4"></div>
<div style="left:459px;top:93px;width:1px;height:34px;background:#dcd8d4"></div>
<div style="left:621px;top:93px;width:1px;height:34px;background:#dcd8d4"></div>
<div style="left:746px;top:93px;width:1px;height:34px;background:#dcd8d4"></div>
<div style="left:834px;top:93px;width:1px;height:34px;background:#dcd8d4"></div>
<div style="left:1033px;top:93px;width:1px;height:34px;background:#dcd8d4"></div>
<div style="left:120px;top:134px;width:1px;height:34px;background:#dcd8d4"></div>
<div style="left:208px;top:134px;width:1px;height:34px;background:#dcd8d4"></div>
<div style="left:296px;top:134px;width:1px;height:34px;background:#dcd8d4"></div>
<div style="left:458px;top:134px;width:1px;height:34px;background:#dcd8d4"></div>
<div style="left:546px;top:134px;width:1px;height:34px;background:#dcd8d4"></div>
<div style="left:634px;top:134px;width:1px;height:34px;background:#dcd8d4"></div>
<div style="left:1003px;top:134px;width:1px;height:34px;background:#dcd8d4"></div>
<div style="left:1128px;top:134px;width:1px;height:34px;background:#dcd8d4"></div>
<div style="left:1173px;top:135px;width:36px;height:34px;background:#dad6d2;border-radius:6px"></div>
<div class="t" style="left:644px;top:145px;font-size:12px;color:#2e3436">X:</div>
<div style="left:658px;top:135px;width:126px;height:34px;background:#fff;border:1px solid #d3cfcb;border-radius:5px"></div>
<div style="left:749px;top:136px;width:1px;height:32px;background:#e4e1de"></div>
<div style="left:766px;top:136px;width:1px;height:32px;background:#e4e1de"></div>
<div class="t" style="left:661px;top:145px;font-size:12.5px;color:#000;letter-spacing:0.4px">107,877</div>
<div class="t" style="left:791px;top:145px;font-size:12px;color:#2e3436">Y:</div>
<div style="left:804px;top:135px;width:126px;height:34px;background:#fff;border:1px solid #d3cfcb;border-radius:5px"></div>
<div style="left:895px;top:136px;width:1px;height:32px;background:#e4e1de"></div>
<div style="left:912px;top:136px;width:1px;height:32px;background:#e4e1de"></div>
<div class="t" style="left:807px;top:145px;font-size:12.5px;color:#000;letter-spacing:0.4px">121,737</div>
<div style="left:935px;top:135px;width:61px;height:34px;background:linear-gradient(#f4f3f2,#edebe9);border:1px solid #d3cfcb;border-radius:5px"></div>
<div class="t" style="left:946px;top:145px;font-size:12.5px;color:#2e3436">px</div>
<div style="left:334px;top:328px;width:405px;height:405px;border:1px solid #666;border-right:none;border-bottom:none"></div>
<div style="left:738px;top:328px;width:3px;height:407px;background:#5f5f5f"></div>
<div style="left:334px;top:732px;width:407px;height:3px;background:#5f5f5f"></div>
<svg style="position:absolute;left:400px;top:420px;" width="170" height="190" viewBox="0 0 170 190">
<g transform="translate(-400 -420)">
<rect x="441.5" y="475.5" width="25" height="30" fill="none" stroke="#ff1010" stroke-width="1.6"/>
<rect x="497.5" y="473.5" width="20" height="43" fill="none" stroke="#ff1010" stroke-width="1.6"/>
<rect x="412.5" y="431.5" width="31" height="22" fill="none" stroke="#ff1010" stroke-width="2"/>
<rect x="528.5" y="432.5" width="26" height="24" fill="none" stroke="#ff1010" stroke-width="2"/>
<rect x="412" y="539" width="25" height="21" fill="none" stroke="#ff1010" stroke-width="2"/>
<rect x="530" y="543" width="20" height="20" fill="none" stroke="#ff1010" stroke-width="2"/>
<path d="M427.5 496.5C427.5 549.5 455 592.5 482.5 592.5C510 592.5 537.5 549.5 537.5 496.5C537.5 443.5 505.5 498.5 479.5 491C449.5 485 427.5 443.5 427.5 496.5Z" fill="#ff0000" stroke="#000" stroke-width="2.2"/>
<rect x="441.5" y="475.5" width="25" height="30" fill="none" stroke="#600000" stroke-width="1" opacity="0.12"/>
<rect x="497.5" y="473.5" width="20" height="43" fill="none" stroke="#600000" stroke-width="1" opacity="0.12"/>
<path d="M427.5 446.5V546.5M537.5 446.5V546.5" stroke="#8080ff" stroke-width="1"/>
<rect x="424.5" y="467.5" width="115" height="127" fill="none" stroke="#5050e0" stroke-width="1" stroke-dasharray="3 3"/>
<circle cx="427.5" cy="443.5" r="3" fill="none" stroke="#000" stroke-width="1"/>
<circle cx="537.5" cy="443.5" r="3" fill="none" stroke="#000" stroke-width="1"/>
<circle cx="427.5" cy="549.5" r="3" fill="none" stroke="#000" stroke-width="1"/>
<circle cx="537.5" cy="549.5" r="3" fill="none" stroke="#000" stroke-width="1"/>
<path d="M449.5 485L505.5 498.5" stroke="#a080ff" stroke-width="1"/>
<circle cx="449.5" cy="485" r="3" fill="none" stroke="#20d0d0" stroke-width="1.1"/>
<circle cx="505.5" cy="498.5" r="3" fill="none" stroke="#20d0d0" stroke-width="1.1"/>
<rect x="424.5" y="493.5" width="6" height="6" fill="#c0c0c0" stroke="#30e0e0" stroke-width="1"/>
<rect x="534.5" y="493.5" width="6" height="6" fill="#c0c0c0" stroke="#30e0e0" stroke-width="1"/>
<rect x="479.5" y="589.5" width="6" height="6" fill="#c0c0c0" stroke="#30e0e0" stroke-width="1"/>
<rect x="475.5" y="487" width="8" height="4" fill="#1010c0"/>
<rect x="475.5" y="491" width="8" height="5" fill="#30ee30"/>
<rect x="475.5" y="487" width="8" height="8.5" fill="none" stroke="#30d0d0" stroke-width="0.8"/>
</g></svg>
<svg style="position:absolute;left:52px;top:173px;" width="18" height="18" viewBox="0 0 18 18"><defs><linearGradient id="lk" x1="0" y1="0" x2="0" y2="1"><stop offset="0" stop-color="#f8d040"/><stop offset="1" stop-color="#c89010"/></linearGradient></defs><rect x="0.5" y="0.5" width="17" height="17" rx="3" fill="#f0eeec" stroke="#d8d4d0"/><path d="M4.5 9V6.5C4.5 3 13.5 3 13.5 6.5V9" fill="none" stroke="#222" stroke-width="1.6"/><rect x="3" y="8.5" width="12" height="7.5" rx="1" fill="url(#lk)" stroke="#222" stroke-width="1"/><circle cx="9" cy="11.5" r="1" fill="#222"/><path d="M9 12V14" stroke="#222" stroke-width="1"/></svg>
<svg style="position:absolute;left:490px;top:184px;" width="10" height="6" viewBox="0 0 10 6"><path d="M0 0H10L5 6Z" fill="#2e3436"/></svg>
<svg style="position:absolute;left:63px;top:562px;" width="6" height="10" viewBox="0 0 6 10"><path d="M0 0V10L6 5Z" fill="#2e3436"/></svg>
<svg style="position:absolute;left:14px;top:59px;" width="16" height="16" viewBox="0 0 16 16"><path d="M3.5 1.6L5.9 4L3.5 6.4L1.1 4Z" fill="#b0b0ff" stroke="#3a3aff" stroke-width="1.4"/><path d="M5 5.5L10 10.5" stroke="#000" stroke-width="1.3"/><path d="M11.3 11.8L7.3 10.6L10.1 7.8Z" fill="#000"/><path d="M12.5 10.799999999999999L14.9 13.2L12.5 15.6L10.1 13.2Z" fill="#a8a8e0" stroke="#2d8a2d" stroke-width="1.4"/></svg>
<svg style="position:absolute;left:64px;top:59px;" width="16" height="16" viewBox="0 0 16 16"><path d="M4.5 1.6L6.9 4L4.5 6.4L2.1 4Z" fill="#b0b0ff" stroke="#3a3aff" stroke-width="1.4"/><path d="M6 5.5L11 10.5" stroke="#000" stroke-width="1.3"/><path d="M12.3 11.8L8.3 10.6L11.1 7.8Z" fill="#000"/><path d="M13.5 10.799999999999999L15.9 13.2L13.5 15.6L11.1 13.2Z" fill="#a8a8e0" stroke="#2d8a2d" stroke-width="1.4"/></svg>
<svg style="position:absolute;left:101px;top:59px;" width="16" height="16" viewBox="0 0 16 16"><path d="M14.5 1V13.5H1" stroke="#c5dcc5" stroke-width="1.3" stroke-dasharray="1.3 1.2" fill="none"/></svg>
<svg style="position:absolute;left:138px;top:59px;" width="16" height="16" viewBox="0 0 16 16"><path d="M13.5 1V13.5H1" stroke="#d0d8d0" stroke-width="1.3" stroke-dasharray="1.3 1.2" fill="none"/><path d="M13.5 11.2L15.8 13.5L13.5 15.8L11.2 13.5Z" fill="#e8e8ee" stroke="#c5dcc5" stroke-width="1.3"/></svg>
<svg style="position:absolute;left:175px;top:59px;" width="16" height="16" viewBox="0 0 16 16"><path d="M12.5 1V13.5H1" stroke="#d0d8d0" stroke-width="1.3" stroke-dasharray="1.3 1.2" fill="none"/><circle cx="12.5" cy="4.5" r="1.8" fill="#e8e8ee" stroke="#b8d8b8" stroke-width="1.2"/></svg>
<svg style="position:absolute;left:212px;top:59px;" width="16" height="16" viewBox="0 0 16 16"><path d="M14.5 1V13.5H1" stroke="#d0d8d0" stroke-width="1.3" stroke-dasharray="1.3 1.2" fill="none"/><circle cx="5" cy="5" r="2" fill="#e8e8ee" stroke="#b8d8b8" stroke-width="1.2"/></svg>
<svg style="position:absolute;left:263px;top:59px;" width="16" height="16" viewBox="0 0 16 16"><path d="M2.5 1.6L4.9 4L2.5 6.4L0.10000000000000009 4Z" fill="#b0b0ff" stroke="#3a3aff" stroke-width="1.4"/><path d="M4 5.5L9 10.5" stroke="#000" stroke-width="1.3"/><path d="M10.3 11.8L6.3 10.6L9.1 7.8Z" fill="#000"/><path d="M11.5 10.799999999999999L13.9 13.2L11.5 15.6L9.1 13.2Z" fill="#a8a8e0" stroke="#2d8a2d" stroke-width="1.4"/></svg>
<svg style="position:absolute;left:301px;top:59px;" width="16" height="16" viewBox="0 0 16 16"><path d="M1 1.5C6 2 10 5 8.5 13.5C11 13 13.5 11.5 14.5 8.5" fill="none" stroke="#1a8a1a" stroke-width="1.6" stroke-linecap="round"/></svg>
<svg style="position:absolute;left:338px;top:59px;" width="16" height="16" viewBox="0 0 16 16"><path d="M1 15L15 2M1 11L15 5.5" stroke="#555" stroke-width="1"/><circle cx="8" cy="8.2" r="1.9" fill="#a8a8e8" stroke="#2a8a2a" stroke-width="1.3"/></svg>
<svg style="position:absolute;left:375px;top:59px;" width="16" height="16" viewBox="0 0 16 16"><path d="M2 2.5C8 3 11 7 10 13M9.5 13.5C11.5 12 13.5 10 14 8" stroke="#555" stroke-width="1.1" fill="none"/><path d="M8.5 11.1L10.9 13.5L8.5 15.9L6.1 13.5Z" fill="#a8a8e8" stroke="#2a8a2a" stroke-width="1.3"/></svg>
<svg style="position:absolute;left:412px;top:59px;" width="16" height="16" viewBox="0 0 16 16"><path d="M1 1.5C4 2 8 2 8 5C8 8 5 10 7.5 13C10 13.5 12 12 14 9.5" stroke="#555" stroke-width="1.1" fill="none"/><rect x="5" y="2.5" width="4" height="4" fill="#8888cc" stroke="#2a8a2a" stroke-width="1.2"/></svg>
<svg style="position:absolute;left:449px;top:59px;" width="16" height="16" viewBox="0 0 16 16"><path d="M1 15L15 2" stroke="#555" stroke-width="1"/><path d="M1 15.5L3.5 10M3.5 15.5L6 10M10 6L12.5 0.5M12.5 6L15 0.5" stroke="#e01010" stroke-width="1.1"/><circle cx="8" cy="8.5" r="1.9" fill="#a8a8e8" stroke="#2a8a2a" stroke-width="1.3"/></svg>
<svg style="position:absolute;left:500px;top:59px;" width="16" height="16" viewBox="0 0 16 16"><path d="M2.5 1.6L4.9 4L2.5 6.4L0.10000000000000009 4Z" fill="#b0b0ff" stroke="#3a3aff" stroke-width="1.4"/><path d="M4 5.5L9 10.5" stroke="#000" stroke-width="1.3"/><path d="M10.3 11.8L6.3 10.6L9.1 7.8Z" fill="#000"/><path d="M11.5 10.799999999999999L13.9 13.2L11.5 15.6L9.1 13.2Z" fill="#a8a8e0" stroke="#2d8a2d" stroke-width="1.4"/></svg>
<svg style="position:absolute;left:536px;top:59px;" width="16" height="16" viewBox="0 0 16 16"><path d="M15.5 2V15.5H2" stroke="#888" stroke-width="1.1" fill="none"/><path d="M15 15V2.5" stroke="#ccc" stroke-width="1"/><circle cx="6" cy="6" r="1.9" fill="#e0e0f0" stroke="#2a8a2a" stroke-width="1.2"/></svg>
<svg style="position:absolute;left:573px;top:59px;" width="16" height="16" viewBox="0 0 16 16"><path d="M3 6H9M6 3V9" stroke="#222" stroke-width="1.2"/><path d="M14.5 1.5V14.5H1" stroke="#444" stroke-width="1.2" stroke-dasharray="1.2 1" fill="none"/></svg>
<svg style="position:absolute;left:612px;top:59px;" width="16" height="16" viewBox="0 0 16 16"><path d="M2.5 14L7 1.5H10L14.5 14H11.2L10.2 11H6.8L5.8 14Z M7.6 8.5H9.4L8.5 5.5Z" fill="#111" fill-rule="evenodd"/><path d="M3 15H14" stroke="#2a8a2a" stroke-width="1"/><path d="M2.5 12.6L4.4 14.5L2.5 16.4L0.6000000000000001 14.5Z" fill="#a8a8e8" stroke="#2a8a2a" stroke-width="1.2"/></svg>
<svg style="position:absolute;left:662px;top:59px;" width="16" height="16" viewBox="0 0 16 16"><defs><linearGradient id="pg" x1="0" y1="0" x2="1" y2="1"><stop offset="0" stop-color="#fff"/><stop offset="1" stop-color="#888"/></linearGradient></defs><rect x="2.5" y="0.5" width="11" height="15" rx="1" fill="url(#pg)" stroke="#222" stroke-width="1.2"/></svg>
<svg style="position:absolute;left:699px;top:59px;" width="16" height="16" viewBox="0 0 16 16"><path d="M1.5 0V16M6 0V16M10.5 0V16M15 0V16M0 1.5H16M0 6H16M0 10.5H16M0 15H16" stroke="#0000ee" stroke-width="1.2"/></svg>
<svg style="position:absolute;left:735px;top:59px;" width="16" height="16" viewBox="0 0 16 16"><path d="M2 1V15M14 1V15M6.5 15L10 1" stroke="#0000ee" stroke-width="1.5"/></svg>
<svg width="0" height="0" style="position:absolute"><defs><linearGradient id="wg" x1="0" y1="0" x2="1" y2="1"><stop offset="0" stop-color="#ffffff"/><stop offset="1" stop-color="#d0d0cc"/></linearGradient><linearGradient id="bg1" x1="0" y1="0" x2="1" y2="1"><stop offset="0" stop-color="#8fb0d8"/><stop offset="1" stop-color="#eef3fa"/></linearGradient></defs></svg>
<svg style="position:absolute;left:14px;top:102px;" width="16" height="16" viewBox="0 0 16 16"><path d="M1.5 0.5H7.5L9.5 2.5V15.5H1.5Z" fill="#fafafa" stroke="#b8b8b8" stroke-width="1"/><circle cx="11.5" cy="8" r="4" fill="#2a64b8" stroke="#fff" stroke-width="0.8"/><path d="M9 8H14M11.5 5.5V10.5" stroke="#fff" stroke-width="1.4"/></svg>
<svg style="position:absolute;left:50px;top:102px;" width="16" height="16" viewBox="0 0 16 16"><path d="M0.5 2.5H5.5L7 4H15.5V15.5H0.5Z" fill="#c4a87c" stroke="#b09468" stroke-width="1"/><rect x="3.5" y="5.5" width="10" height="4" fill="#f4f4f0" stroke="#888" stroke-width="0.8"/><path d="M0.5 15.5L1.5 9.5H15.5V15.5Z" fill="#dcc49a" stroke="#b09468" stroke-width="1"/></svg>
<svg style="position:absolute;left:88px;top:102px;" width="16" height="16" viewBox="0 0 16 16"><path d="M5.5 0.5H8.5V7H11L7 11.5L3 7H5.5Z" fill="#fff" stroke="#777" stroke-width="1"/><rect x="0.5" y="10.5" width="13" height="5" fill="#3a78d0" stroke="#2a5aa8" stroke-width="1"/><rect x="3" y="11.5" width="8" height="2" fill="#bcd4f0"/></svg>
<svg style="position:absolute;left:125px;top:102px;" width="16" height="16" viewBox="0 0 16 16"><rect x="0.5" y="1.5" width="15" height="9" rx="1.5" fill="#555" stroke="#333"/><rect x="3" y="3" width="9" height="2" fill="#ddd"/><rect x="3.5" y="8.5" width="9" height="7" fill="#eef2e8" stroke="#333" stroke-width="1"/><path d="M5 11H10M5 13H9" stroke="#7ab07a" stroke-width="0.8"/></svg>
<svg style="position:absolute;left:176px;top:102px;" width="16" height="16" viewBox="0 0 16 16"><path d="M4.5 0.5H11L15.5 5V15.5H4.5Z" fill="url(#wg)" stroke="#111" stroke-width="1.1"/><path d="M11 0.5V5H15.5" fill="none" stroke="#111" stroke-width="1"/><path d="M0 8H8" stroke="#111" stroke-width="1.3"/><path d="M11 8L7 5V11Z" fill="#111"/></svg>
<svg style="position:absolute;left:212px;top:102px;" width="16" height="16" viewBox="0 0 16 16"><path d="M0.5 0.5H7L11.5 5V15.5H0.5Z" fill="url(#wg)" stroke="#111" stroke-width="1.1"/><path d="M7 0.5V5H11.5" fill="none" stroke="#111" stroke-width="1"/><path d="M6 8H13" stroke="#111" stroke-width="1.3"/><path d="M16 8L12 5V11Z" fill="#111"/></svg>
<svg style="position:absolute;left:264px;top:102px;" width="16" height="16" viewBox="0 0 16 16"><path d="M4 3L1 6.5L4 10M1.5 6.5H10.5C14 6.5 14 13 10.5 13H6" fill="none" stroke="#a88a00" stroke-width="2.6" stroke-linejoin="round"/><path d="M4 3L1 6.5L4 10M1.5 6.5H10.5C14 6.5 14 13 10.5 13H6" fill="none" stroke="#f0d030" stroke-width="1.1" stroke-linejoin="round"/></svg>
<svg style="position:absolute;left:301px;top:102px;" width="16" height="16" viewBox="0 0 16 16"><g transform="translate(16 0) scale(-1 1)"><path d="M4 3L1 6.5L4 10M1.5 6.5H10.5C14 6.5 14 13 10.5 13H6" fill="none" stroke="#d4e4cc" stroke-width="2.6" stroke-linejoin="round"/><path d="M4 3L1 6.5L4 10M1.5 6.5H10.5C14 6.5 14 13 10.5 13H6" fill="none" stroke="#eef6ea" stroke-width="1.1" stroke-linejoin="round"/></g></svg>
<svg style="position:absolute;left:352px;top:102px;" width="16" height="16" viewBox="0 0 16 16"><rect x="0.5" y="0.5" width="10" height="10" fill="#f4f4f4" stroke="#777"/><path d="M2.5 3H8M2.5 5H8M2.5 7H6" stroke="#888" stroke-width="0.9"/><rect x="5.5" y="5.5" width="10" height="10" fill="#f4f4f4" stroke="#777"/><path d="M9 9H13M7.5 11H13M7.5 13H13" stroke="#888" stroke-width="0.9"/></svg>
<svg style="position:absolute;left:389px;top:102px;" width="16" height="16" viewBox="0 0 16 16"><path d="M1 0.5L9.5 9.5M15 0.5L6.5 9.5" stroke="#999" stroke-width="1.5"/><circle cx="3.5" cy="12.5" r="3" fill="#d81818" stroke="#a00" stroke-width="0.8"/><circle cx="12.5" cy="12.5" r="3" fill="#d81818" stroke="#a00" stroke-width="0.8"/><circle cx="3.5" cy="12.5" r="1.1" fill="#fff"/><circle cx="12.5" cy="12.5" r="1.1" fill="#fff"/></svg>
<svg style="position:absolute;left:426px;top:102px;" width="16" height="16" viewBox="0 0 16 16"><rect x="0.5" y="1.5" width="14" height="14" rx="1" fill="#d8a860" stroke="#a87830"/><rect x="5" y="0" width="6" height="3" rx="1" fill="#ddd" stroke="#888" stroke-width="0.8"/><rect x="5.5" y="5.5" width="10" height="10" fill="#f8f8f8" stroke="#777"/><path d="M8 8.5H13M8 10.5H13M8 12.5H12" stroke="#888" stroke-width="0.9"/></svg>
<svg style="position:absolute;left:477px;top:102px;" width="16" height="16" viewBox="0 0 16 16"><circle cx="7" cy="7" r="6.2" fill="#e8edf2" stroke="#222" stroke-width="1.3"/><rect x="3.5" y="4" width="7" height="6" fill="#fff" stroke="#333" stroke-width="0.8" stroke-dasharray="1 0.8"/><path d="M11 11L15 15" stroke="#111" stroke-width="2.2"/></svg>
<svg style="position:absolute;left:514px;top:102px;" width="16" height="16" viewBox="0 0 16 16"><circle cx="7" cy="7" r="6.2" fill="#e8edf2" stroke="#222" stroke-width="1.3"/><rect x="3.5" y="3.5" width="4.5" height="4.5" fill="#f0d060" stroke="#444" stroke-width="0.8"/><rect x="6" y="6" width="4.5" height="4.5" fill="#f0d060" stroke="#444" stroke-width="0.8"/><path d="M11 11L15 15" stroke="#111" stroke-width="2.2"/></svg>
<svg style="position:absolute;left:551px;top:102px;" width="16" height="16" viewBox="0 0 16 16"><circle cx="7" cy="7" r="6.2" fill="#e8edf2" stroke="#222" stroke-width="1.3"/><rect x="4" y="3" width="6" height="8" fill="#fff" stroke="#333" stroke-width="0.9"/><path d="M11 11L15 15" stroke="#111" stroke-width="2.2"/></svg>
<svg style="position:absolute;left:588px;top:102px;" width="16" height="16" viewBox="0 0 16 16"><rect x="3" y="1.5" width="10" height="13" fill="url(#wg)" stroke="#aaa" stroke-width="0.8"/><path d="M1 1V4M1 1H4M15 1V4M15 1H12M1 15V12M1 15H4M15 15V12M15 15H12" stroke="#111" stroke-width="1.6"/></svg>
<svg style="position:absolute;left:639px;top:102px;" width="16" height="16" viewBox="0 0 16 16"><rect x="0.5" y="0.5" width="11" height="11" fill="#f8f8f8" stroke="#333"/><rect x="4.5" y="4.5" width="11" height="11" fill="url(#bg1)" stroke="#333"/></svg>
<svg style="position:absolute;left:676px;top:102px;" width="16" height="16" viewBox="0 0 16 16"><rect x="0.5" y="0.5" width="11" height="11" fill="#f8f8f8" stroke="#333"/><rect x="4.5" y="4.5" width="11" height="11" fill="#dfe8f2" stroke="#333"/><rect x="7" y="9" width="6" height="5" fill="#f0c020" stroke="#333" stroke-width="0.8"/><path d="M8 9V7.5C8 5.5 12 5.5 12 7.5V9" fill="none" stroke="#333" stroke-width="0.9"/></svg>
<svg style="position:absolute;left:713px;top:102px;" width="16" height="16" viewBox="0 0 16 16"><rect x="0.5" y="0.5" width="11" height="11" fill="#f8f8f8" stroke="#333"/><rect x="4.5" y="4.5" width="11" height="11" fill="#dfe8f2" stroke="#333"/><rect x="7" y="9" width="6" height="5" fill="#60b030" stroke="#333" stroke-width="0.8"/><path d="M11 9V7.5C11 5.5 15 5.5 15 7.5" fill="none" stroke="#333" stroke-width="0.9"/></svg>
<svg style="position:absolute;left:764px;top:102px;" width="16" height="16" viewBox="0 0 16 16"><rect x="3" y="7" width="8" height="7" fill="#c8d8ec" stroke="#333" stroke-width="0.9"/><circle cx="11" cy="5.5" r="3.8" fill="#d8e4f0" stroke="#333" stroke-width="0.9"/><path d="M0 0H2M14 0H16M0 16H2M14 16H16" stroke="#111" stroke-width="2.2"/></svg>
<svg style="position:absolute;left:801px;top:102px;" width="16" height="16" viewBox="0 0 16 16"><rect x="3" y="7" width="8" height="7" fill="#f0c020" stroke="#333" stroke-width="0.9"/><circle cx="11" cy="5.5" r="3.8" fill="#d8e4f0" stroke="#333" stroke-width="0.9"/><path d="M0 0H2M14 0H16M0 16H2M14 16H16M0 8H2M14 8H16" stroke="#111" stroke-width="2.2"/></svg>
<svg style="position:absolute;left:852px;top:102px;" width="16" height="16" viewBox="0 0 16 16"><path d="M0.5 0.5H15.5V2L3 15.5H0.5Z" fill="#fff" stroke="#111" stroke-width="1.6"/><path d="M2 15L12 5L15 8L5 15Z" fill="#333"/><path d="M12 3L15 1V6Z" fill="#f0b020"/></svg>
<svg style="position:absolute;left:889px;top:102px;" width="16" height="16" viewBox="0 0 16 16"><path d="M1 1H15V5.5H14C13.5 3.5 12.5 3 10 3H9.5V13C9.5 14 10 14.5 11.5 14.5V15.5H4.5V14.5C6 14.5 6.5 14 6.5 13V3H6C3.5 3 2.5 3.5 2 5.5H1Z" fill="#111"/></svg>
<svg style="position:absolute;left:926px;top:102px;" width="16" height="16" viewBox="0 0 16 16"><path d="M0.5 4L9 1L15.5 4L7 7.5Z" fill="#f4f4f4" stroke="#222" stroke-width="0.9"/><path d="M0.5 7L7 10.5L15.5 7" fill="none" stroke="#222" stroke-width="0.9"/><path d="M0.5 10L7 13.5L15.5 10" fill="none" stroke="#222" stroke-width="0.9"/><path d="M0.5 5.5L7 9L15.5 5.5M0.5 8.5L7 12L15.5 8.5" fill="none" stroke="#888" stroke-width="0.6"/></svg>
<svg style="position:absolute;left:963px;top:102px;" width="16" height="16" viewBox="0 0 16 16"><rect x="0.5" y="0.5" width="15" height="15" fill="#f2f2f2" stroke="#111" stroke-width="1.1"/><rect x="1" y="1" width="14" height="3" fill="#a8c4e8"/><path d="M6 7L3.5 9.5L6 12M10 7L12.5 9.5L10 12" fill="none" stroke="#222" stroke-width="1"/></svg>
<svg style="position:absolute;left:1000px;top:102px;" width="16" height="16" viewBox="0 0 16 16"><path d="M0.5 0V16" stroke="#d01818" stroke-width="1.2"/><rect x="2.5" y="0.5" width="5" height="4" fill="#b8d0ec" stroke="#333" stroke-width="0.9"/><rect x="2.5" y="6" width="13" height="4" fill="#b8d0ec" stroke="#333" stroke-width="0.9"/><rect x="2.5" y="11.5" width="10" height="4" fill="#b8d0ec" stroke="#333" stroke-width="0.9"/></svg>
<svg style="position:absolute;left:1051px;top:102px;" width="16" height="16" viewBox="0 0 16 16"><path d="M2.5 0.5H9.5L13.5 4.5V15.5H2.5Z" fill="#f6f6f6" stroke="#ccc" stroke-width="1"/><circle cx="7.5" cy="10" r="2.2" fill="none" stroke="#bbb" stroke-width="1.2"/><path d="M9 11.5L12 14.5" stroke="#bbb" stroke-width="1.3"/></svg>
<svg style="position:absolute;left:1088px;top:102px;" width="16" height="16" viewBox="0 0 16 16"><path d="M2 15L10 6" stroke="#2f66b0" stroke-width="3.2"/><path d="M9 5L12.5 1.5L14.5 3.5L11 7Z" fill="#aaa" stroke="#555" stroke-width="0.7"/><path d="M2.5 3.5C2 1.5 4.5 0 6 1L4.5 3L6 4.5L8 3C9 4.5 7.5 7 5.5 6.5L13 14C14 15.5 15.5 14 14.5 13L7 5.5" fill="#ddd" stroke="#555" stroke-width="0.8"/></svg>
<svg style="position:absolute;left:14px;top:143px;" width="16" height="16" viewBox="0 0 16 16"><path d="M1 13.5H15" stroke="#333" stroke-width="1"/><path d="M4 5H12M8 1V9" stroke="#000" stroke-width="2"/><rect x="5.5" y="11.0" width="5.0" height="5.0" fill="#9a9ae8" stroke="#0000ee" stroke-width="1.3"/></svg>
<svg style="position:absolute;left:50px;top:143px;" width="16" height="16" viewBox="0 0 16 16"><path d="M3.5 6H12.5L8 10.5Z" fill="#2e3436"/></svg>
<svg style="position:absolute;left:87px;top:143px;" width="16" height="16" viewBox="0 0 16 16"><path d="M1 13.5H15" stroke="#555" stroke-width="1"/><path d="M4 5H12" stroke="#000" stroke-width="2"/><rect x="5.5" y="11.0" width="5.0" height="5.0" fill="#b4b4ee" stroke="#8888e8" stroke-width="1.3"/></svg>
<svg style="position:absolute;left:137px;top:143px;" width="16" height="16" viewBox="0 0 16 16"><path d="M1 14H15" stroke="#333" stroke-width="1"/><path d="M8 6V11" stroke="#000" stroke-width="1.2"/><path d="M5.5 9.5H10.5L8 12Z" fill="#000"/><rect x="1.3" y="2.3" width="3.4" height="3.4" fill="#c0c0f0" stroke="#6060e8" stroke-width="1.1"/><rect x="10.8" y="2.3" width="3.4" height="3.4" fill="#c0c0f0" stroke="#6060e8" stroke-width="1.1"/><rect x="5.9" y="11.9" width="4.2" height="4.2" fill="#9a9ae8" stroke="#0000ee" stroke-width="1.3"/></svg>
<svg style="position:absolute;left:174px;top:143px;" width="16" height="16" viewBox="0 0 16 16"><path d="M1 4H15" stroke="#333" stroke-width="1"/><path d="M8 6V10" stroke="#000" stroke-width="1.2"/><path d="M5.5 8.5H10.5L8 11Z" fill="#000"/><rect x="5.9" y="1.9" width="4.2" height="4.2" fill="#c0c0f0" stroke="#6060e8" stroke-width="1.3"/><rect x="2" y="12" width="4" height="4" fill="#fff" stroke="#0000ee" stroke-width="1.3"/><rect x="10" y="12" width="4" height="4" fill="#fff" stroke="#0000ee" stroke-width="1.3"/></svg>
<svg style="position:absolute;left:225px;top:143px;" width="16" height="16" viewBox="0 0 16 16"><path d="M1 14H15" stroke="#333" stroke-width="1"/><path d="M8 6V10" stroke="#000" stroke-width="1.2"/><path d="M5.5 8.5H10.5L8 11Z" fill="#000"/><rect x="1.7" y="2.2" width="3.6" height="3.6" fill="#c0c0f0" stroke="#6060e8" stroke-width="1.1"/><rect x="10.7" y="2.2" width="3.6" height="3.6" fill="#c0c0f0" stroke="#6060e8" stroke-width="1.1"/><rect x="1.7" y="12.2" width="3.6" height="3.6" fill="#fff" stroke="#0000ee" stroke-width="1.3"/><rect x="10.7" y="12.2" width="3.6" height="3.6" fill="#fff" stroke="#0000ee" stroke-width="1.3"/></svg>
<svg style="position:absolute;left:262px;top:143px;" width="16" height="16" viewBox="0 0 16 16"><path d="M1 4H15" stroke="#333" stroke-width="1"/><path d="M8 5V9" stroke="#000" stroke-width="1.2"/><path d="M5.5 7.5H10.5L8 10Z" fill="#000"/><rect x="1.7" y="2.2" width="3.6" height="3.6" fill="#c0c0f0" stroke="#6060e8" stroke-width="1.1"/><rect x="10.7" y="2.2" width="3.6" height="3.6" fill="#c0c0f0" stroke="#6060e8" stroke-width="1.1"/><rect x="1.7" y="12.2" width="3.6" height="3.6" fill="#fff" stroke="#0000ee" stroke-width="1.3"/><rect x="10.7" y="12.2" width="3.6" height="3.6" fill="#fff" stroke="#0000ee" stroke-width="1.3"/></svg>
<svg style="position:absolute;left:313px;top:143px;" width="16" height="16" viewBox="0 0 16 16"><path d="M0 2C4 2 7 6 7.5 12C10 9 13 6 15 1.5" fill="none" stroke="#444" stroke-width="1.1"/><path d="M7.5 9.9L10.1 12.5L7.5 15.1L4.9 12.5Z" fill="#a0a0f0" stroke="#0000ee" stroke-width="1.3"/></svg>
<svg style="position:absolute;left:350px;top:143px;" width="16" height="16" viewBox="0 0 16 16"><path d="M1 3C1 10 6 13 8 13C10 13 15 10 15 3" fill="none" stroke="#444" stroke-width="1.1"/><rect x="5.8" y="10.3" width="4.4" height="4.4" fill="#9a9ae8" stroke="#0000ee" stroke-width="1.3"/></svg>
<svg style="position:absolute;left:388px;top:143px;" width="16" height="16" viewBox="0 0 16 16"><path d="M1 3C1 10 6 12 8 12C10 12 15 10 15 3" fill="none" stroke="#444" stroke-width="1.1"/><path d="M1 12.5H15" stroke="#444" stroke-width="1"/><rect x="5.6" y="10.1" width="4.8" height="4.8" fill="#9a9ae8" stroke="#0000ee" stroke-width="1.3"/><circle cx="1.5" cy="12.5" r="1.3" fill="#a0a0f0" stroke="#0000ee" stroke-width="1"/><circle cx="14.5" cy="12.5" r="1.3" fill="#a0a0f0" stroke="#0000ee" stroke-width="1"/></svg>
<svg style="position:absolute;left:425px;top:143px;" width="16" height="16" viewBox="0 0 16 16"><path d="M1 3C1 10 6 13 8 13C10 13 15 10 15 3" fill="none" stroke="#444" stroke-width="1.1"/><circle cx="8" cy="12.5" r="2.3" fill="#a0a0f0" stroke="#0000ee" stroke-width="1.3"/></svg>
<svg style="position:absolute;left:476px;top:143px;" width="16" height="16" viewBox="0 0 16 16"><path d="M3 14L13 3" stroke="#444" stroke-width="1.2"/><rect x="0.2999999999999998" y="11.8" width="4.4" height="4.4" fill="#c8c8f0" stroke="#0000ee" stroke-width="1.3"/><rect x="11.3" y="0.7999999999999998" width="4.4" height="4.4" fill="#c8c8f0" stroke="#0000ee" stroke-width="1.3"/></svg>
<svg style="position:absolute;left:513px;top:143px;" width="16" height="16" viewBox="0 0 16 16"><path d="M2.5 14C2.5 8 7 3 13 3" fill="none" stroke="#444" stroke-width="1.2"/><rect x="0.2999999999999998" y="11.8" width="4.4" height="4.4" fill="#c8c8f0" stroke="#0000ee" stroke-width="1.3"/><rect x="10.8" y="0.7999999999999998" width="4.4" height="4.4" fill="#c8c8f0" stroke="#0000ee" stroke-width="1.3"/></svg>
<svg style="position:absolute;left:564px;top:143px;" width="16" height="16" viewBox="0 0 16 16"><path d="M6.5 2.5C3 2.5 1.5 5 3 7.5H7V11C7 14 9 14.5 11 14.5C13 14.5 14 13.5 14 12" fill="none" stroke="#444" stroke-width="1.1"/><rect x="5.2" y="0.7" width="3.6" height="3.6" fill="#c8c8f0" stroke="#0000ee" stroke-width="1.3"/><rect x="1.2" y="5.7" width="3.6" height="3.6" fill="#c8c8f0" stroke="#0000ee" stroke-width="1.3"/><rect x="11.7" y="11.2" width="3.6" height="3.6" fill="#c8c8f0" stroke="#0000ee" stroke-width="1.3"/></svg>
<svg style="position:absolute;left:600px;top:143px;" width="16" height="16" viewBox="0 0 16 16"><path d="M2 11L9 1.5H14.5L12 6L7 14Z" fill="#b0c8f0" opacity="0.8"/><path d="M9 2H14M12 6H15" stroke="#8ab0e8" stroke-width="1"/><rect x="5.8" y="1.3" width="3.4" height="3.4" fill="#c8c8f0" stroke="#0000ee" stroke-width="1.3"/><rect x="1.3" y="5.8" width="3.4" height="3.4" fill="#c8c8f0" stroke="#0000ee" stroke-width="1.3"/><rect x="9.3" y="4.8" width="3.4" height="3.4" fill="#c8c8f0" stroke="#0000ee" stroke-width="1.3"/><rect x="4.8" y="9.8" width="3.4" height="3.4" fill="#c8c8f0" stroke="#0000ee" stroke-width="1.3"/></svg>
<svg style="position:absolute;left:753px;top:147px;" width="10" height="10" viewBox="0 0 10 10"><path d="M0 5H10" stroke="#2e3436" stroke-width="1.6"/></svg>
<svg style="position:absolute;left:770px;top:147px;" width="10" height="10" viewBox="0 0 10 10"><path d="M0 5H10M5 0V10" stroke="#2e3436" stroke-width="1.6"/></svg>
<svg style="position:absolute;left:899px;top:147px;" width="10" height="10" viewBox="0 0 10 10"><path d="M0 5H10" stroke="#2e3436" stroke-width="1.6"/></svg>
<svg style="position:absolute;left:916px;top:147px;" width="10" height="10" viewBox="0 0 10 10"><path d="M0 5H10M5 0V10" stroke="#2e3436" stroke-width="1.6"/></svg>
<svg style="position:absolute;left:972px;top:148px;" width="11" height="6" viewBox="0 0 11 6"><path d="M0 0H11L5.5 6Z" fill="#2e3436"/></svg>
<svg style="position:absolute;left:1021px;top:143px;" width="16" height="16" viewBox="0 0 16 16"><path d="M2 14C3 8 6 4 12 2" fill="none" stroke="#00dd00" stroke-width="1.5"/><path d="M7 15C7 10 5 7 3 6M5 8C9 6 12 6 14 8" fill="none" stroke="#111" stroke-width="1.1"/><circle cx="2" cy="14" r="1.6" fill="#0000ee" stroke="#0000ee" stroke-width="0.5"/><circle cx="12.5" cy="2" r="1.6" fill="#0000ee" stroke="#0000ee" stroke-width="0.5"/></svg>
<svg style="position:absolute;left:1058px;top:143px;" width="16" height="16" viewBox="0 0 16 16"><path d="M2 14C3 8 6 4 12 2" fill="none" stroke="#2020ee" stroke-width="1.5"/><path d="M7 15C7 10 5 7 3 6M5 8C9 6 12 6 14 8" fill="none" stroke="#111" stroke-width="1.1"/><circle cx="2" cy="14" r="1.6" fill="#0000ee" stroke="#0000ee" stroke-width="0.5"/><circle cx="12.5" cy="2" r="1.6" fill="#0000ee" stroke="#0000ee" stroke-width="0.5"/></svg>
<svg style="position:absolute;left:1095px;top:143px;" width="16" height="16" viewBox="0 0 16 16"><g opacity="0.4"><path d="M2 14C3 8 6 4 12 2" fill="none" stroke="#8b8" stroke-width="1.2"/><path d="M3 9L6 10M5 6L8 7M8 4L10 6" stroke="#8a8" stroke-width="0.8"/><path d="M9 9L15 12L9 15Z" fill="#f0e090" stroke="#999" stroke-width="0.8"/><path d="M15 8.5V15.5" stroke="#999"/><circle cx="2" cy="14" r="1.5" fill="#88f" stroke="#88f" stroke-width="0.5"/><circle cx="13" cy="2" r="1.5" fill="#88f" stroke="#88f" stroke-width="0.5"/></g></svg>
<svg style="position:absolute;left:1146px;top:143px;" width="16" height="16" viewBox="0 0 16 16"><path d="M0.5 0.5H6L4.5 2L7 4.5L4.5 7L2 4.5L0.5 6Z M15.5 0.5V6L14 4.5L11.5 7L9 4.5L11.5 2L10 0.5Z M0.5 15.5V10L2 11.5L4.5 9L7 11.5L4.5 14L6 15.5Z M15.5 15.5H10L11.5 14L9 11.5L11.5 9L14 11.5L15.5 10Z" fill="#000"/></svg>
<svg style="position:absolute;left:1181px;top:143px;" width="16" height="16" viewBox="0 0 16 16"><path d="M3 5V11" stroke="#666" stroke-width="1"/><path d="M3 10C5 5 9 2.5 15 2.5" fill="none" stroke="#666" stroke-width="1.1"/><circle cx="3" cy="2.5" r="1.7" fill="#fff" stroke="#0000ee" stroke-width="1.1"/><rect x="0.5" y="10.5" width="5.0" height="5.0" fill="#8888cc" stroke="#0000ee" stroke-width="1.4"/></svg>
<svg style="position:absolute;left:1220px;top:143px;" width="16" height="16" viewBox="0 0 16 16"><path d="M2.5 13C1.5 8 7 2 13 3.5C14.5 8 8 13 2.5 13" fill="none" stroke="#ee1111" stroke-width="1.3"/><rect x="10.8" y="0.7999999999999998" width="4.4" height="4.4" fill="#fff" stroke="#0000ee" stroke-width="1.3"/><rect x="0.2999999999999998" y="11.3" width="4.4" height="4.4" fill="#fff" stroke="#0000ee" stroke-width="1.3"/></svg>
<div style="left:4px;top:211px;width:43px;height:33px;background:#dad6d2;border-radius:6px"></div>
<div style="left:4px;top:251px;width:42px;height:1px;background:#dcd8d4"></div>
<div style="left:4px;top:435px;width:42px;height:1px;background:#dcd8d4"></div>
<div style="left:4px;top:585px;width:42px;height:1px;background:#dcd8d4"></div>
<div style="left:4px;top:736px;width:42px;height:1px;background:#dcd8d4"></div>
<svg width="0" height="0" style="position:absolute"><defs><linearGradient id="rg" x1="0" y1="0" x2="1" y2="1"><stop offset="0" stop-color="#f4f8fc"/><stop offset="1" stop-color="#9ab4d0"/></linearGradient><radialGradient id="cg" cx="0.5" cy="0.3" r="0.7"><stop offset="0" stop-color="#fff"/><stop offset="1" stop-color="#f08090"/></radialGradient><linearGradient id="stg" x1="0" y1="0" x2="1" y2="1"><stop offset="0" stop-color="#fffbd0"/><stop offset="1" stop-color="#e8c840"/></linearGradient><linearGradient id="bxg" x1="0" y1="0" x2="1" y2="1"><stop offset="0" stop-color="#b8b8e8"/><stop offset="1" stop-color="#3a3a88"/></linearGradient><linearGradient id="grg" x1="0" y1="0" x2="1" y2="1"><stop offset="0" stop-color="#40a040"/><stop offset="1" stop-color="#e8f8e8"/></linearGradient><linearGradient id="mg" x1="0" y1="0" x2="1" y2="1"><stop offset="0" stop-color="#4aa070"/><stop offset="1" stop-color="#a8d0e8"/></linearGradient><linearGradient id="bkg" x1="0" y1="0" x2="1" y2="0"><stop offset="0" stop-color="#a8c8e8"/><stop offset="1" stop-color="#3a6aa0"/></linearGradient></defs></svg>
<svg style="position:absolute;left:13px;top:181px" width="24" height="24" viewBox="0 0 22 22"><path d="M6 2V17L9.5 13.5L12.5 20L15 19L12 12.5H17Z" fill="#111"/></svg>
<svg style="position:absolute;left:8px;top:208px;" width="30" height="34" viewBox="0 0 30 34"><path d="M15 10Q19 7.5 24.5 9.5M9 17Q7 21 7.5 26.5" fill="none" stroke="#666" stroke-width="1.1"/><path d="M13.5 14.5L27.5 24L21 29.5Z" fill="#000" stroke="#fff" stroke-width="0.6"/><rect x="8" y="10" width="7" height="7" fill="#8a8af0" stroke="#0000ff" stroke-width="1.6"/><rect x="24.5" y="7.5" width="4" height="4" fill="#c8c8ff" stroke="#4a4aff" stroke-width="1.2"/><rect x="5.5" y="26.5" width="4" height="4" fill="#c8c8ff" stroke="#4a4aff" stroke-width="1.2"/></svg>
<svg style="position:absolute;left:13px;top:263px" width="26" height="26" viewBox="0 0 26 26"><rect x="2.5" y="2.5" width="19" height="19" fill="url(#rg)" stroke="#111" stroke-width="1.3"/></svg>
<svg style="position:absolute;left:13px;top:297px" width="26" height="26" viewBox="0 0 26 26"><defs><linearGradient id="cg2" x1="0" y1="0" x2="0" y2="1"><stop offset="0" stop-color="#fff"/><stop offset="1" stop-color="#f590a8"/></linearGradient></defs><circle cx="12" cy="12" r="9.6" fill="url(#cg2)" stroke="#222" stroke-width="1.3"/></svg>
<svg style="position:absolute;left:13px;top:330px" width="26" height="26" viewBox="0 0 26 26"><path d="M1.5 8L9 2.5L16 7L14 15L5 15.5Z" fill="url(#stg)" stroke="#333" stroke-width="1.1"/><path d="M15.5 6.5L17.5 12L23.5 12.2L19 16L20.5 22L15.5 18.5L10.5 22L12 16L7.5 12.2L13.5 12Z" fill="url(#stg)" stroke="#333" stroke-width="1.1"/></svg>
<svg style="position:absolute;left:13px;top:364px" width="26" height="26" viewBox="0 0 26 26"><path d="M12 1.5L21.5 6V18L12 23.5L2.5 18V6Z" fill="#9a9ad8" stroke="#333" stroke-width="1.1"/><path d="M12 1.5L21.5 6V18L15 14V9Z" fill="#dcdcf8"/><path d="M2.5 6L12 1.5L15 9L3 9Z" fill="#b8b8e8"/><path d="M2.5 18L15 14L21.5 18L12 23.5Z" fill="#3a3a88"/><path d="M12 1.5L21.5 6V18L12 23.5L2.5 18V6Z" fill="none" stroke="#333" stroke-width="1.1"/></svg>
<svg style="position:absolute;left:12px;top:398px" width="26" height="26" viewBox="0 0 26 26"><path d="M12.5 12.5C13.5 11.5 15 12.5 14.5 14C13.5 16 10.5 16 9.5 13.5C8.5 10.5 11 8 14 8.5C18 9 19.5 13.5 18 17C16 21 10.5 21.5 7 19C3 16 2.5 9.5 6.5 5.5C10.5 1.5 17.5 1.5 21.5 6C25 10 24.5 17 21.5 22" fill="none" stroke="#111" stroke-width="1.25"/></svg>
<svg style="position:absolute;left:13px;top:446px" width="26" height="26" viewBox="0 0 26 26"><path d="M1 2H12M1.5 2C6 5 8.5 11 9.5 21.5" fill="none" stroke="#222" stroke-width="1.1"/><rect x="1.5" y="19.5" width="4.5" height="4" fill="#fff" stroke="#111" stroke-width="1.2"/><path d="M6 21.5H11" stroke="#111" stroke-width="1.1"/><circle cx="11.5" cy="21.5" r="1.2" fill="#111"/><defs><linearGradient id="pb" x1="0" y1="0" x2="1" y2="1"><stop offset="0" stop-color="#a8d0f0"/><stop offset="1" stop-color="#3a70b0"/></linearGradient></defs><path d="M15 13L20 2L25 5.5L18 15.5Z" fill="url(#pb)" stroke="#234" stroke-width="0.9"/><path d="M15 13L18 15.5L16.5 17L14 15Z" fill="#f0c030" stroke="#543" stroke-width="0.7"/><path d="M14 15L16.5 17L12 21.5Z" fill="#222"/></svg>
<svg style="position:absolute;left:13px;top:480px" width="26" height="26" viewBox="0 0 26 26"><path d="M3 3C6 1 9 3 5.5 8.5C3 12 5.5 11.5 7 12.5C4 17 6 22 10.5 22C14 22 17 20 19.5 18" fill="none" stroke="#222" stroke-width="1.2"/><defs><linearGradient id="py" x1="0" y1="0" x2="1" y2="1"><stop offset="0" stop-color="#ffe060"/><stop offset="1" stop-color="#e89a10"/></linearGradient></defs><path d="M11 14L19 2.5L24.5 6L17 17.5Z" fill="url(#py)" stroke="#222" stroke-width="1"/><path d="M11 14L17 17.5L11.5 20Z" fill="#fffbe8" stroke="#222" stroke-width="0.9"/><path d="M11.5 20L12.5 17.5L14 18.5Z" fill="#111"/></svg>
<svg style="position:absolute;left:13px;top:514px" width="26" height="26" viewBox="0 0 26 26"><path d="M8 1.5C2 4.5 1 12 3.5 17C6 22 13 23.5 24 21.5C17.5 21 12 19.5 9.5 15C7 10.5 7 6 9.5 2Z" fill="#111"/><path d="M12 18C15 20 19 20 23 19" fill="none" stroke="#222" stroke-width="1"/><path d="M12 19L14.5 8.5L19.5 10.5Z" fill="#f0c830" stroke="#222" stroke-width="0.9"/><path d="M13.5 8L16 4L21.5 6.5L19.5 11Z" fill="#d82020" stroke="#222" stroke-width="0.7"/><path d="M16 4L18.5 0.5L24 3L21.5 6.5Z" fill="#6aa0d8" stroke="#234" stroke-width="0.7"/></svg>
<svg style="position:absolute;left:13px;top:547px" width="26" height="26" viewBox="0 0 26 26"><defs><linearGradient id="ag" x1="0" y1="0" x2="1" y2="1"><stop offset="0" stop-color="#555"/><stop offset="1" stop-color="#111"/></linearGradient></defs><path d="M0.5 23L8 3.5H13.5L21 23H16.5L14.8 18.5H6.7L5 23Z M8 14.5H13.5L10.8 7.5Z" fill="url(#ag)" fill-rule="evenodd" stroke="#000" stroke-width="0.6"/><path d="M22.5 3V24M20.5 3H24.5M20.5 24H24.5" stroke="#333" stroke-width="0.9"/></svg>
<svg style="position:absolute;left:13px;top:596px" width="26" height="26" viewBox="0 0 26 26"><defs><linearGradient id="grg2" x1="0" y1="0" x2="1" y2="1"><stop offset="0" stop-color="#fff"/><stop offset="1" stop-color="#3aa03a"/></linearGradient></defs><rect x="2" y="2" width="21" height="21" fill="url(#grg2)" stroke="#5ab05a" stroke-width="0.6"/><path d="M6 6L18 16" stroke="#333" stroke-width="1.2"/><rect x="3.5" y="3.5" width="4.5" height="4.5" rx="1" fill="#fff" stroke="#222" stroke-width="1.1"/><rect x="16.5" y="14.5" width="4.5" height="4.5" rx="1" fill="#fff" stroke="#222" stroke-width="1.1"/></svg>
<svg style="position:absolute;left:13px;top:630px" width="26" height="26" viewBox="0 0 26 26"><defs><linearGradient id="mg2" x1="0" y1="0" x2="1" y2="1"><stop offset="0" stop-color="#6aa8b0"/><stop offset="1" stop-color="#5ab080"/></linearGradient></defs><path d="M4 4C9 6 15 6 20 4C18 9 18 15 20 20C15 18 9 18 4 20C6 15 6 9 4 4Z" fill="url(#mg2)" stroke="#333" stroke-width="0.8"/><rect x="1.5" y="1.5" width="5" height="5" fill="#fff" stroke="#111" stroke-width="1.3"/><rect x="17.5" y="1.5" width="5" height="5" fill="#fff" stroke="#111" stroke-width="1.3"/><rect x="1.5" y="17.5" width="5" height="5" fill="#fff" stroke="#111" stroke-width="1.3"/><rect x="17.5" y="17.5" width="5" height="5" fill="#fff" stroke="#111" stroke-width="1.3"/></svg>
<svg style="position:absolute;left:13px;top:664px" width="26" height="26" viewBox="0 0 26 26"><path d="M17 2.5C19 0.5 23.5 4.5 21.5 6.5L19 9L15 5Z" fill="#111"/><path d="M14 6L19.5 11.5" stroke="#111" stroke-width="2.6"/><path d="M16 8L7 17L5.5 19.5L8 18.5L17.5 9.5Z" fill="#c8ddf0" stroke="#223" stroke-width="1"/><ellipse cx="5" cy="22" rx="1.6" ry="2.2" fill="#5a90d0" stroke="#335" stroke-width="0.6"/></svg>
<svg style="position:absolute;left:13px;top:698px" width="26" height="26" viewBox="0 0 26 26"><defs><linearGradient id="bk2" x1="0" y1="0" x2="1" y2="0"><stop offset="0" stop-color="#c8e0f4"/><stop offset="1" stop-color="#3a6aa0"/></linearGradient></defs><ellipse cx="12" cy="21.5" rx="10" ry="2.5" fill="#8ad08a" stroke="#3a8a3a" stroke-width="0.8"/><path d="M8 7L20 2.5L24 13L12 17.5Z" fill="url(#bk2)" stroke="#234" stroke-width="1"/><path d="M8 7C6 10 5.5 15 9 19.5L11 20" fill="none" stroke="#4aa04a" stroke-width="2.2"/><path d="M9 5C10 1 13 2 13 9" fill="none" stroke="#333" stroke-width="0.9"/></svg>
<svg style="position:absolute;left:21px;top:765px;" width="8" height="12" viewBox="0 0 8 12"><path d="M1 0V12L7 6Z" fill="#2e3436"/></svg>
<svg style="position:absolute;left:1088px;top:181px;" width="18" height="18" viewBox="0 0 18 18"><path d="M2 16V2H17" fill="none" stroke="#000" stroke-width="2.2"/><path d="M1 17C4 15 8 13 10 10L16 2.5L17 4L12 12C9 15 5 17 1 17Z" fill="#000"/><path d="M5 14L11 9" stroke="#ddd" stroke-width="0.7" stroke-dasharray="1 1"/><path d="M14.5 4.5L17.5 1.5V9Z" fill="#f8c020"/></svg>
<svg style="position:absolute;left:1537px;top:179px;" width="14" height="12" viewBox="0 0 14 12"><rect x="0.5" y="0.5" width="13" height="11" rx="2" fill="#f4f4f4" stroke="#bbb"/><path d="M9 2.5V9.5L4 6Z" fill="#999"/></svg>
<svg style="position:absolute;left:1573px;top:179px;" width="14" height="12" viewBox="0 0 14 12"><rect x="0.5" y="0.5" width="13" height="11" rx="2" fill="#f4f4f4" stroke="#bbb"/><path d="M4 3L10 9M10 3L4 9" stroke="#888" stroke-width="1.8"/></svg>
<svg style="position:absolute;left:1070px;top:173px;" width="18" height="18" viewBox="0 0 18 18"><defs><linearGradient id="b1g" x1="0" y1="0" x2="0" y2="1"><stop offset="0" stop-color="#fff"/><stop offset="1" stop-color="#e4e4e4"/></linearGradient></defs><rect x="1.5" y="0.8" width="15" height="16" rx="3.5" fill="url(#b1g)" stroke="#8a8a86" stroke-width="1.1"/><path d="M6.5 5.5L9.5 3.5H11V12.5H8.5V6.5L6.8 7.3Z" fill="#fff" stroke="#888" stroke-width="0.9"/></svg>
<svg style="position:absolute;left:1114px;top:221px;" width="16" height="16" viewBox="0 0 16 16"><defs><linearGradient id="tf" x1="0" y1="0" x2="1" y2="1"><stop offset="0" stop-color="#98b8dc"/><stop offset="1" stop-color="#f4f8fc"/></linearGradient></defs><rect x="0" y="0" width="16" height="16" fill="url(#tf)"/></svg>
<svg style="position:absolute;left:1206px;top:221px;" width="16" height="16" viewBox="0 0 16 16"><rect x="0.5" y="0.5" width="15" height="15" fill="#e6e3e0" stroke="#222" stroke-width="1"/><path d="M15.5 0.5V15.5H0.5" fill="none" stroke="#888" stroke-width="1"/></svg>
<svg style="position:absolute;left:1352px;top:221px;" width="17" height="17" viewBox="0 0 17 17"><path d="M1 4.5H15M1 15.5H15" stroke="#222" stroke-width="1.4"/><path d="M12 1.5L15.5 4.5L12 7.5" fill="none" stroke="#222" stroke-width="1.3"/><path d="M1 10H3M5 10H7M9 10H11M13 10H15" stroke="#222" stroke-width="1.6"/></svg>
<svg style="position:absolute;left:1115px;top:268px;" width="10" height="10" viewBox="0 0 10 10"><path d="M1 1L9 9M9 1L1 9" stroke="#111" stroke-width="2"/></svg>
<svg width="0" height="0" style="position:absolute"><defs><linearGradient id="lg1" x1="0" y1="0" x2="1" y2="1"><stop offset="0" stop-color="#9ab6d8"/><stop offset="1" stop-color="#fff"/></linearGradient><radialGradient id="rg1" cx="0.5" cy="0.5" r="0.6"><stop offset="0" stop-color="#fff"/><stop offset="1" stop-color="#9ab6d8"/></radialGradient></defs></svg>
<svg style="position:absolute;left:1148px;top:266px;" width="16" height="16" viewBox="0 0 16 16"><rect x="0.5" y="0.5" width="15" height="15" fill="#9cb6d8" stroke="#111" stroke-width="1.1"/></svg>
<svg style="position:absolute;left:1184px;top:266px;" width="16" height="16" viewBox="0 0 16 16"><rect x="0.5" y="0.5" width="15" height="15" fill="url(#lg1)" stroke="#111" stroke-width="1.1"/></svg>
<svg style="position:absolute;left:1220px;top:266px;" width="16" height="16" viewBox="0 0 16 16"><rect x="0.5" y="0.5" width="15" height="15" fill="url(#rg1)" stroke="#111" stroke-width="1.1"/></svg>
<svg style="position:absolute;left:1256px;top:266px;" width="16" height="16" viewBox="0 0 16 16"><rect x="0.5" y="0.5" width="15" height="15" fill="#fff" stroke="#111" stroke-width="1.1"/><rect x="1" y="1" width="7" height="7" fill="#9cb6d8"/><rect x="8" y="8" width="7" height="7" fill="#9cb6d8"/></svg>
<svg style="position:absolute;left:1292px;top:266px;" width="16" height="16" viewBox="0 0 16 16"><rect x="0.5" y="0.5" width="15" height="15" fill="#9cb6d8" stroke="#111" stroke-width="1.1"/><circle cx="4.5" cy="4.5" r="2.5" fill="#fff"/><circle cx="11.5" cy="4.5" r="2.5" fill="#fff"/><circle cx="4.5" cy="11.5" r="2.5" fill="#fff"/><circle cx="11.5" cy="11.5" r="2.5" fill="#fff"/><circle cx="8" cy="8" r="2" fill="#9cb6d8"/></svg>
<svg style="position:absolute;left:1328px;top:266px;" width="16" height="16" viewBox="0 0 16 16"><rect x="0.5" y="0.5" width="15" height="15" fill="#9cb6d8" stroke="#111" stroke-width="1.1"/><rect x="2" y="2" width="11" height="11" fill="#fff"/><path d="M2 13.5H13.5V2" fill="none" stroke="#111" stroke-width="1"/></svg>
<svg style="position:absolute;left:1364px;top:265px;" width="14" height="18" viewBox="0 0 14 18"><path d="M3 5.5C3 2 11 1.5 11 5.5C11 8 7.5 8.5 7.5 11" fill="none" stroke="#111" stroke-width="2.8"/><circle cx="7.5" cy="15" r="1.8" fill="#111"/></svg>
<svg style="position:absolute;left:1547px;top:368px;" width="10" height="10" viewBox="0 0 10 10"><path d="M0 5H10" stroke="#2e3436" stroke-width="1.6"/></svg>
<svg style="position:absolute;left:1564px;top:368px;" width="10" height="10" viewBox="0 0 10 10"><path d="M0 5H10M5 0V10" stroke="#2e3436" stroke-width="1.6"/></svg>
<svg style="position:absolute;left:1547px;top:404px;" width="10" height="10" viewBox="0 0 10 10"><path d="M0 5H10" stroke="#d0d0d0" stroke-width="1.6"/></svg>
<svg style="position:absolute;left:1564px;top:404px;" width="10" height="10" viewBox="0 0 10 10"><path d="M0 5H10M5 0V10" stroke="#2e3436" stroke-width="1.6"/></svg>
<svg style="position:absolute;left:1547px;top:440px;" width="10" height="10" viewBox="0 0 10 10"><path d="M0 5H10" stroke="#2e3436" stroke-width="1.6"/></svg>
<svg style="position:absolute;left:1564px;top:440px;" width="10" height="10" viewBox="0 0 10 10"><path d="M0 5H10M5 0V10" stroke="#2e3436" stroke-width="1.6"/></svg>
<svg style="position:absolute;left:1547px;top:476px;" width="10" height="10" viewBox="0 0 10 10"><path d="M0 5H10" stroke="#2e3436" stroke-width="1.6"/></svg>
<svg style="position:absolute;left:1564px;top:476px;" width="10" height="10" viewBox="0 0 10 10"><path d="M0 5H10M5 0V10" stroke="#d0d0d0" stroke-width="1.6"/></svg>
<svg style="position:absolute;left:1129px;top:356px;" width="8" height="34" viewBox="0 0 8 34"><path d="M0.5 0.5L3.5 4L7 0.5" fill="none" stroke="#ddd" stroke-width="1"/><path d="M0.5 33.5L3.5 30L7 33.5" fill="none" stroke="#ddd" stroke-width="1"/></svg>
<svg style="position:absolute;left:1129px;top:392px;" width="8" height="34" viewBox="0 0 8 34"><path d="M0.5 0.5L3.5 4L7 0.5" fill="none" stroke="#ddd" stroke-width="1"/><path d="M0.5 33.5L3.5 30L7 33.5" fill="none" stroke="#ddd" stroke-width="1"/></svg>
<svg style="position:absolute;left:1129px;top:428px;" width="8" height="34" viewBox="0 0 8 34"><path d="M0.5 0.5L3.5 4L7 0.5" fill="none" stroke="#ddd" stroke-width="1"/><path d="M0.5 33.5L3.5 30L7 33.5" fill="none" stroke="#ddd" stroke-width="1"/></svg>
<svg style="position:absolute;left:1496px;top:464px;" width="6" height="34" viewBox="0 0 6 34"><path d="M5.5 0.5L2 4L5.5 7" fill="#000" stroke="#ccc" stroke-width="0.8"/><path d="M5.5 33.5L2 30L5.5 27" fill="#000" stroke="#ccc" stroke-width="0.8"/></svg>
<svg style="position:absolute;left:1103px;top:545px;" width="16" height="16" viewBox="0 0 16 16"><defs><linearGradient id="tri" x1="0" y1="0" x2="1" y2="1"><stop offset="0" stop-color="#a8e8a8"/><stop offset="0.5" stop-color="#f0f0ff"/><stop offset="1" stop-color="#f8b0d0"/></linearGradient></defs><path d="M1 1L15 9L3 15Z" fill="url(#tri)" opacity="0.8"/></svg>
<svg style="position:absolute;left:1124px;top:545px;" width="16" height="16" viewBox="0 0 16 16"><circle cx="8" cy="8" r="6.5" fill="none" stroke="#f4b8c0" stroke-width="3"/></svg>
<svg style="position:absolute;left:1155px;top:545px;" width="16" height="16" viewBox="0 0 16 16"><path d="M10 2C11.5 0.5 15 3.5 13.5 5L11.5 7L9 4.5Z" fill="#111"/><path d="M8 3.5L12.5 8" stroke="#111" stroke-width="1.8"/><path d="M10 5.5L3 12.5L2 14.5L4 13.5L11 6.5Z" fill="#dde" stroke="#222" stroke-width="1"/></svg>
<svg style="position:absolute;left:1562px;top:597px;" width="11" height="6" viewBox="0 0 11 6"><path d="M0 0H11L5.5 6Z" fill="#2e3436"/></svg>
<svg style="position:absolute;left:1566px;top:646px;" width="10" height="10" viewBox="0 0 10 10"><path d="M0 5H10" stroke="#d0d0d0" stroke-width="1.6"/></svg>
<svg style="position:absolute;left:1581px;top:646px;" width="10" height="10" viewBox="0 0 10 10"><path d="M0 5H10M5 0V10" stroke="#2e3436" stroke-width="1.6"/></svg>
<svg style="position:absolute;left:1566px;top:678px;" width="10" height="10" viewBox="0 0 10 10"><path d="M0 5H10" stroke="#2e3436" stroke-width="1.6"/></svg>
<svg style="position:absolute;left:1581px;top:678px;" width="10" height="10" viewBox="0 0 10 10"><path d="M0 5H10M5 0V10" stroke="#2e3436" stroke-width="1.6"/></svg>
<svg style="position:absolute;left:1099px;top:713px;" width="17" height="17" viewBox="0 0 17 17"><path d="M1 0V17" stroke="#d01818" stroke-width="1.2"/><rect x="3" y="1.5" width="6" height="4" fill="#b8d0ec" stroke="#333" stroke-width="0.9"/><rect x="3" y="6.5" width="13" height="4" fill="#b8d0ec" stroke="#333" stroke-width="0.9"/><rect x="3" y="11.5" width="9" height="4" fill="#b8d0ec" stroke="#333" stroke-width="0.9"/></svg>
<svg style="position:absolute;left:1099px;top:747px;" width="17" height="17" viewBox="0 0 17 17"><path d="M1.5 0.5H8L12.5 5V16.5H1.5Z" fill="#fff" stroke="#111" stroke-width="1"/><path d="M8 0.5V5H12.5" fill="none" stroke="#111"/><path d="M6 9H13" stroke="#111" stroke-width="1.2"/><path d="M16 9L12.5 6.5V11.5Z" fill="#111"/></svg>
<svg style="position:absolute;left:1099px;top:781px;" width="17" height="11" viewBox="0 0 17 11"><path d="M1 1H16V3L4 17H1Z" fill="#fff" stroke="#111" stroke-width="1.8"/><path d="M3 17L13 6L16 9L6 17Z" fill="#333"/><path d="M13 4L17 1.5V7Z" fill="#f0b020"/></svg>
<svg style="position:absolute;left:1575px;top:717px;" width="12" height="8" viewBox="0 0 12 8"><path d="M1 7L6 2L11 7" fill="none" stroke="#2e3436" stroke-width="1.6"/></svg>
<svg style="position:absolute;left:1575px;top:751px;" width="12" height="8" viewBox="0 0 12 8"><path d="M1 7L6 2L11 7" fill="none" stroke="#2e3436" stroke-width="1.6"/></svg>
<svg style="position:absolute;left:1575px;top:785px;" width="12" height="8" viewBox="0 0 12 8"><path d="M1 7L6 2L11 7" fill="none" stroke="#2e3436" stroke-width="1.6"/></svg>
<svg style="position:absolute;left:1070px;top:774px;" width="18" height="18" viewBox="0 0 18 18"><defs><linearGradient id="cmt" x1="0" y1="0" x2="1" y2="1"><stop offset="0" stop-color="#a8e8b8"/><stop offset="0.6" stop-color="#f0f0ff"/><stop offset="1" stop-color="#f8b0d8"/></linearGradient></defs><rect x="0.5" y="0.5" width="17" height="17" rx="3" fill="#f8f6f4" stroke="#e0dcd8"/><path d="M3 2L15 10L4 16Z" fill="url(#cmt)"/></svg>
<svg style="position:absolute;left:173px;top:837px;" width="10" height="10" viewBox="0 0 10 10"><path d="M0 5H10" stroke="#2e3436" stroke-width="1.6"/></svg>
<svg style="position:absolute;left:190px;top:837px;" width="10" height="10" viewBox="0 0 10 10"><path d="M0 5H10M5 0V10" stroke="#2e3436" stroke-width="1.6"/></svg>
<svg style="position:absolute;left:219px;top:833px;" width="17" height="16" viewBox="0 0 17 16"><path d="M1 9C4 4 13 4 16 9C13 14 4 14 1 9Z" fill="#fff" stroke="#111" stroke-width="1.3"/><circle cx="8.5" cy="9" r="3.3" fill="#111"/><circle cx="7.5" cy="8" r="1" fill="#fff"/><path d="M3 5L1.5 3M6 3.5L5.5 1M10 3L10.5 0.5M13.5 4L15 2" stroke="#111" stroke-width="1.1"/></svg>
<svg style="position:absolute;left:255px;top:833px;" width="16" height="17" viewBox="0 0 16 17"><path d="M4.5 7V4.5C4.5 1 10.5 0.5 11 4.5" fill="none" stroke="#222" stroke-width="1.4"/><path d="M2 8L12 6.5L13.5 14.5L3.5 16Z" fill="#f0d870" stroke="#222" stroke-width="1"/><circle cx="7.8" cy="10.8" r="1" fill="#222"/><path d="M8 11L8.3 13" stroke="#222"/></svg>
<svg style="position:absolute;left:340px;top:842px;" width="11" height="6" viewBox="0 0 11 6"><path d="M0 0H11L5.5 6Z" fill="#2e3436"/></svg>
<svg style="position:absolute;left:1410px;top:837px;" width="10" height="10" viewBox="0 0 10 10"><path d="M0 5H10" stroke="#2e3436" stroke-width="1.6"/></svg>
<svg style="position:absolute;left:1433px;top:837px;" width="10" height="10" viewBox="0 0 10 10"><path d="M0 5H10M5 0V10" stroke="#2e3436" stroke-width="1.6"/></svg>
<svg style="position:absolute;left:1551px;top:837px;" width="10" height="10" viewBox="0 0 10 10"><path d="M0 5H10" stroke="#2e3436" stroke-width="1.6"/></svg>
<svg style="position:absolute;left:1572px;top:837px;" width="10" height="10" viewBox="0 0 10 10"><path d="M0 5H10M5 0V10" stroke="#2e3436" stroke-width="1.6"/></svg>
<svg style="position:absolute;left:15px;top:871px;" width="18" height="18" viewBox="0 0 18 18"><path d="M0 2.5L7.5 1.4V8.5H0Z M8.5 1.2L18 0V8.5H8.5Z M0 9.5H7.5V16.6L0 15.5Z M8.5 9.5H18V18L8.5 16.8Z" fill="#000"/></svg>
<svg style="position:absolute;left:62px;top:867px;" width="26" height="26" viewBox="0 0 26 26"><defs><linearGradient id="tb2" x1="0" y1="0" x2="1" y2="1"><stop offset="0" stop-color="#3a9ae8"/><stop offset="1" stop-color="#1a3a98"/></linearGradient></defs><circle cx="13" cy="13" r="11.5" fill="url(#tb2)"/><circle cx="15" cy="12" r="5.5" fill="#d8d6d8"/><path d="M3 10L9 9L16 12L15 21L6 19C3 17 2 13 3 10Z" fill="#fbfbf8"/><path d="M4 11L10 15L16 12" fill="none" stroke="#bbb" stroke-width="0.7"/><path d="M5 19L9 21L7 22Z" fill="#1a2a78"/></svg>
<svg style="position:absolute;left:112px;top:869px;" width="16" height="22" viewBox="0 0 16 22"><path d="M1 3L7 1V21L1 19Z" fill="#e8c050"/><path d="M3 5H15V20H3Z" fill="#f8d870"/><path d="M1 3L7 1V21L1 19Z" fill="#f0cc60" opacity="0.9"/></svg>
<svg style="position:absolute;left:272px;top:867px;" width="26" height="26" viewBox="0 0 26 26"><circle cx="13" cy="13" r="11.5" fill="#1da4e8"/><circle cx="6" cy="6" r="5" fill="#1da4e8"/><circle cx="20" cy="20" r="5" fill="#1da4e8"/><path d="M17 8.5C15.5 6.5 9 6.5 9 10C9 13.5 17 12 17 16C17 19.5 10 19.5 8.5 17" fill="none" stroke="#fff" stroke-width="2.4"/></svg>
<svg style="position:absolute;left:320px;top:867px;" width="26" height="26" viewBox="0 0 26 26"><circle cx="13" cy="13" r="12" fill="#db4437"/><path d="M13 13L2.6 7A12 12 0 0 1 23.4 7Z" fill="#db4437"/><path d="M13 13L23.4 7A12 12 0 0 1 13 25Z" fill="#f4c20d"/><path d="M13 13L13 25A12 12 0 0 1 2.6 7Z" fill="#0f9d58"/><circle cx="13" cy="13" r="5.5" fill="#fff"/><circle cx="13" cy="13" r="4.3" fill="#4285f4"/></svg>
<svg style="position:absolute;left:370px;top:867px;" width="26" height="26" viewBox="0 0 26 26"><ellipse cx="12" cy="9" rx="10" ry="6" fill="none" stroke="#e04848" stroke-width="1.5"/><path d="M8 4L16 18M17 5L12 17" stroke="#888" stroke-width="1.4"/><circle cx="12" cy="20" r="3" fill="none" stroke="#2a7ad0" stroke-width="1.8"/><circle cx="19" cy="20" r="3" fill="none" stroke="#2a7ad0" stroke-width="1.8"/></svg>
<svg style="position:absolute;left:419px;top:867px;" width="26" height="26" viewBox="0 0 26 26"><path d="M12 3H17L24 23H19L15 12L11 23" fill="#d8d8d8" stroke="#aaa" stroke-width="0.8"/><path d="M3 10L6 4L8 6L10 3L11 8L13 9L8 22H5L6 14Z" fill="#c83020"/></svg>
<svg style="position:absolute;left:467px;top:867px;" width="26" height="26" viewBox="0 0 26 26"><path d="M13 1L2 13C1 14 2 15 3.5 15H7L5 18H10L8.5 21H14L13 23H17C18.5 23 19 22 18 21L17 20H21C22.5 20 23 18.5 22 17.5L20 16H22.5C24 16 24.5 14 23.5 13Z" fill="#000"/><path d="M13 3L8 9L10.5 8.5L13 10.5L15.5 8L18 9.5Z" fill="#fff"/><circle cx="6" cy="20" r="1.6" fill="#000"/><circle cx="20" cy="22" r="1.3" fill="#000"/></svg>
<svg style="position:absolute;left:627px;top:867px;" width="26" height="26" viewBox="0 0 26 26"><path d="M13 1L2 13C1 14 2 15 3.5 15H7L5 18H10L8.5 21H14L13 23H17C18.5 23 19 22 18 21L17 20H21C22.5 20 23 18.5 22 17.5L20 16H22.5C24 16 24.5 14 23.5 13Z" fill="#000"/><path d="M13 3L8 9L10.5 8.5L13 10.5L15.5 8L18 9.5Z" fill="#fff"/><circle cx="6" cy="20" r="1.6" fill="#000"/><circle cx="20" cy="22" r="1.3" fill="#000"/></svg>
<svg style="position:absolute;left:791px;top:867px;" width="20" height="26" viewBox="0 0 20 26"><path d="M2 1H14L19 6V25H2Z" fill="#fff" stroke="#2a6ac8" stroke-width="1.5"/><path d="M14 1L19 6H14Z" fill="#2a6ac8"/><path d="M5 10H10M5 13H16M5 16H16M5 19H13" stroke="#2a6ac8" stroke-width="1.4"/><rect x="11" y="8.5" width="5" height="4" fill="none" stroke="#2a6ac8" stroke-width="1.2"/></svg>
<svg style="position:absolute;left:0px;top:0px;" width="24" height="23" viewBox="0 0 24 23"><defs><linearGradient id="ilg" x1="0.3" y1="0" x2="0.6" y2="1"><stop offset="0" stop-color="#fff"/><stop offset="0.3" stop-color="#ddd"/><stop offset="0.45" stop-color="#333"/><stop offset="1" stop-color="#000"/></linearGradient></defs><path d="M10 3L18 11L14.5 12.5L13 15H8.5L7 13.5H4.5L2 10.5Z" fill="url(#ilg)" stroke="#111" stroke-width="0.6"/><path d="M4.5 13.5H10M5 16.5H9M9 14V18.5H11.5V14Z" stroke="#111" stroke-width="1.4" fill="#111"/><circle cx="15.5" cy="16.5" r="1" fill="#111"/><circle cx="16.5" cy="15.5" r="0.8" fill="#111"/></svg>
<svg style="position:absolute;left:1390px;top:874px;" width="14" height="8" viewBox="0 0 14 8"><path d="M1 7.5L7 1.5L13 7.5" fill="none" stroke="#000" stroke-width="1.3"/></svg>
<svg style="position:absolute;left:1414px;top:873px;" width="14" height="14" viewBox="0 0 14 14"><path d="M1 13A12 12 0 0 1 13 1" fill="none" stroke="#888" stroke-width="1.1"/><path d="M4 13A9 9 0 0 1 13 4" fill="none" stroke="#333" stroke-width="1.1"/><path d="M7 13A6 6 0 0 1 13 7" fill="none" stroke="#333" stroke-width="1.1"/><circle cx="11" cy="11.5" r="1.6" fill="#000"/></svg>
<svg style="position:absolute;left:1436px;top:873px;" width="18" height="13" viewBox="0 0 18 13"><path d="M3 1V4M6 1V4M1.5 4H7.5V7C7.5 9 3 9 3 7Z M4.5 8.5V12" fill="none" stroke="#000" stroke-width="1"/><rect x="7" y="3.5" width="9" height="7" fill="none" stroke="#000" stroke-width="1.1"/><rect x="16" y="5.5" width="1.5" height="3" fill="#000"/></svg>
<svg style="position:absolute;left:1460px;top:873px;" width="16" height="14" viewBox="0 0 16 14"><path d="M1 4.5H4L8 1V13L4 9.5H1Z" fill="none" stroke="#000" stroke-width="1.1"/><path d="M10 5L14 9M14 5L10 9" stroke="#000" stroke-width="1.2"/></svg>
<svg style="position:absolute;left:1559px;top:871px;" width="26" height="26" viewBox="0 0 26 26"><path d="M1 1H17V12H7L3 15V12H1Z" fill="#000"/><path d="M4 4H14M4 6.5H14M4 9H12" stroke="#fff" stroke-width="1"/><circle cx="16" cy="16" r="8.5" fill="#d8d4d4" stroke="#777" stroke-width="1"/></svg>
<div class="t" style="left:1566px;top:872px;font-size:12px;color:#111;line-height:14px;letter-spacing:-0.5px;top:881px">17</div>
<div style="left:1595px;top:860px;width:1px;height:40px;background:#b8b2b2"></div>
</body></html>
